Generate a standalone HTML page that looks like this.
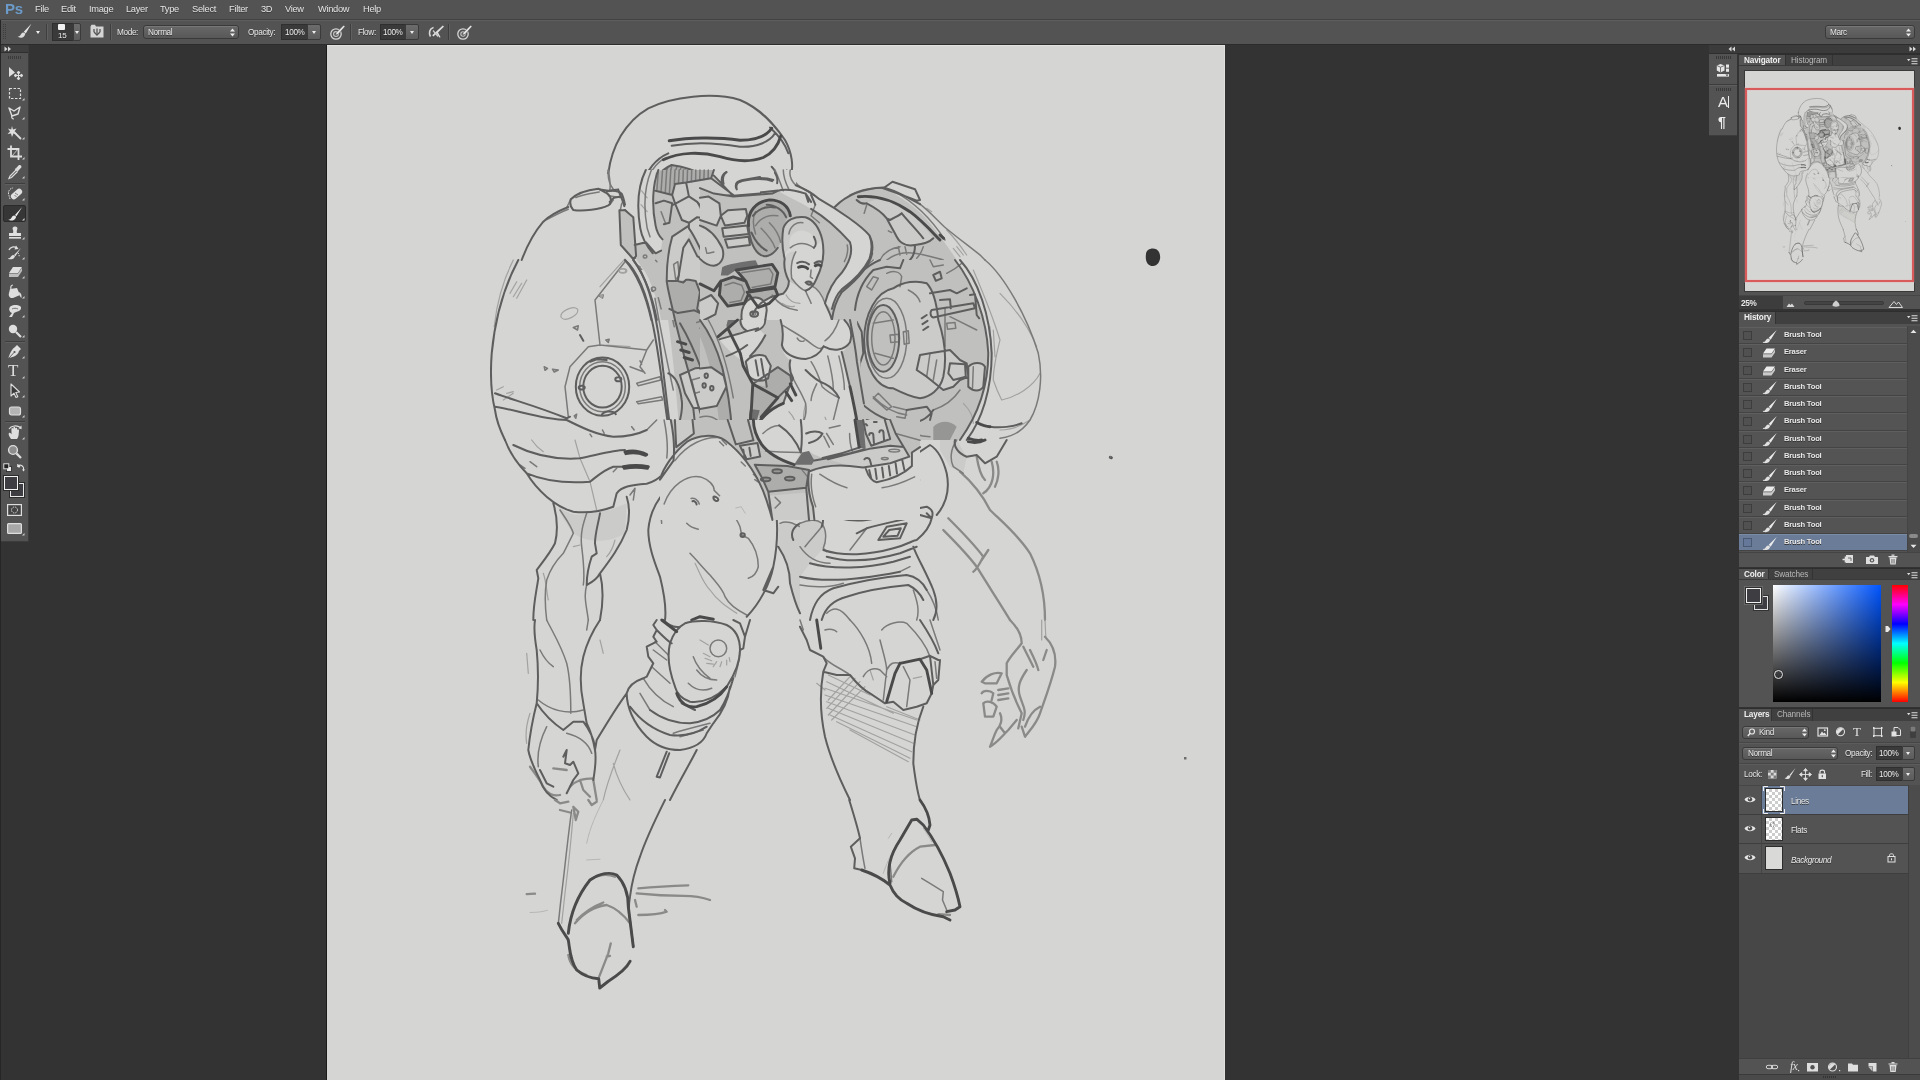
<!DOCTYPE html>
<html lang="en">
<head>
<meta charset="utf-8">
<title>Photoshop</title>
<style>
*{box-sizing:border-box;margin:0;padding:0}
html,body{width:1920px;height:1080px;overflow:hidden;background:#333333;font-family:"Liberation Sans",sans-serif;font-size:9px;color:#e6e6e6}
.abs{position:absolute}
#menubar,#optbar,.phead,.lbl,.tab{will-change:transform}
#menubar{position:absolute;left:0;top:0;width:1920px;height:20px;background:#535353;border-bottom:1px solid #424242}
#menubar .ps{position:absolute;left:5px;top:0px;font-size:15px;font-weight:bold;color:#6c9bc9;letter-spacing:-0.3px;line-height:17px}
#menubar span.m{position:absolute;top:3px;font-size:9.3px;letter-spacing:-0.3px;color:#e4e4e4;text-shadow:0 1px 0 #3a3a3a;line-height:12px}
#optbar{position:absolute;left:0;top:20px;width:1920px;height:25px;background:#535353;border-top:1px solid #5e5e5e;border-bottom:1px solid #2c2c2c}
.lbl{position:absolute;font-size:8.2px;letter-spacing:-0.35px;line-height:10px;color:#e8e8e8;text-shadow:0 1px 0 #333;white-space:nowrap}
.dd{position:absolute;height:14px;border:1px solid #3a3a3a;border-radius:3px;background:linear-gradient(#686868,#585858);box-shadow:inset 0 1px 0 #777}
.inp{position:absolute;height:16px;background:#3a3a3a;border:1px solid #2f2f2f;border-right:none}
.btn{position:absolute;height:16px;background:linear-gradient(#6c6c6c,#5c5c5c);border:1px solid #3a3a3a;border-radius:0 2px 2px 0}
.sep{position:absolute;width:1px;background:#3f3f3f;border-right:1px solid #606060;box-sizing:content-box}
.tri{position:absolute;width:0;height:0;border-left:3px solid transparent;border-right:3px solid transparent;border-top:3px solid #eee}
#canvas{position:absolute;left:327px;top:45px;width:898px;height:1035px;background:#d5d5d3;overflow:hidden;box-shadow:-1px 0 0 #1c1c1c,inset 0 1px 0 #e3e3e1,inset -1px 0 0 #e0e0de}
#canvas svg{filter:blur(0.5px)}
#tools{position:absolute;left:1px;top:45px;width:27.500px;height:497px;background:#535353;border-right:1px solid #3c3c3c;border-bottom:1px solid #3c3c3c}
.phead{position:absolute;background:#404040;border-top:1px solid #2e2e2e;border-bottom:1px solid #3a3a3a}
.tab{position:absolute;top:0;height:100%;font-size:8.200px;line-height:11.500px;letter-spacing:-0.150px;padding:0 5px;color:#b8b8b8;border-right:1px solid #333}
.tab.on{background:#535353;color:#f0f0f0;font-weight:bold}
.panel{position:absolute;background:#535353}
</style>
</head>
<body>
<!-- MENU BAR -->
<div class="abs" style="left:0;top:20px;width:1px;height:1060px;background:#262626;z-index:5"></div>
<div id="menubar">
<span class="ps">Ps</span>
<span class="m" style="left:35px">File</span>
<span class="m" style="left:61px">Edit</span>
<span class="m" style="left:89px">Image</span>
<span class="m" style="left:126px">Layer</span>
<span class="m" style="left:160px">Type</span>
<span class="m" style="left:192px">Select</span>
<span class="m" style="left:229px">Filter</span>
<span class="m" style="left:261px">3D</span>
<span class="m" style="left:285px">View</span>
<span class="m" style="left:318px">Window</span>
<span class="m" style="left:363px">Help</span>
</div>
<!-- OPTIONS BAR -->
<div id="optbar">

<svg class="abs" style="left:3px;top:3px" width="4" height="16"><g fill="#3c3c3c"><rect x="0" y="0" width="1" height="1"/><rect x="2" y="0" width="1" height="1"/><rect x="0" y="2" width="1" height="1"/><rect x="2" y="2" width="1" height="1"/><rect x="0" y="4" width="1" height="1"/><rect x="2" y="4" width="1" height="1"/><rect x="0" y="6" width="1" height="1"/><rect x="2" y="6" width="1" height="1"/><rect x="0" y="8" width="1" height="1"/><rect x="2" y="8" width="1" height="1"/><rect x="0" y="10" width="1" height="1"/><rect x="2" y="10" width="1" height="1"/><rect x="0" y="12" width="1" height="1"/><rect x="2" y="12" width="1" height="1"/><rect x="0" y="14" width="1" height="1"/><rect x="2" y="14" width="1" height="1"/></g></svg>
<svg class="abs" style="left:16px;top:1.500px" width="18" height="17" viewBox="0 0 18 17"><path d="M15.4 0.800 L7.800 8.800 L9.800 10.600 Z" fill="#e6e6e6"/><path d="M7.6 9.6 C5.6 9.6 5 11.4 4.2 12.6 C3.4 13.6 2.2 13.6 1.6 13.6 C3 15 6.4 15 8 13.4 C9 12.4 9.4 11 9.2 10.6 Z" fill="#dcdcdc"/></svg>
<div class="tri" style="left:36px;top:9.500px;border-left-width:2.5px;border-right-width:2.5px"></div>
<div class="sep" style="left:46px;top:2.500px;height:16.500px"></div>
<div class="inp" style="left:52px;top:2px;width:21px;height:17.500px;border-right:none"></div>
<div class="abs" style="left:58px;top:2.500px;width:7px;height:6.500px;background:#f2f2f2;border-radius:1px"></div>
<div class="lbl" style="left:57.500px;top:9.500px;font-size:8px;letter-spacing:-0.300px">15</div>
<div class="btn" style="left:73px;top:2px;width:8px;height:17.500px"></div>
<div class="tri" style="left:74.500px;top:9.500px;border-left-width:2.5px;border-right-width:2.5px"></div>
<svg class="abs" style="left:90px;top:3px" width="14" height="14" viewBox="0 0 14 14"><path d="M0.5 2.5 L0.5 13.5 L13.5 13.5 L13.5 2.5 L6 2.5 L5 0.8 L1.5 0.8 Z" fill="#d4d4d4"/><path d="M4 5 v3 M7 4.5 v5 M10 5 v3 M4 8 l3 3 l3 -3" stroke="#555" stroke-width="1.3" fill="none"/></svg>
<div class="sep" style="left:110px;top:2.500px;height:16.500px"></div>
<div class="lbl" style="left:117px;top:7px">Mode:</div>
<div class="dd" style="left:143px;top:4px;width:96px"></div>
<div class="lbl" style="left:148px;top:7px">Normal</div>
<svg class="abs" style="left:229px;top:7px" width="7" height="9" viewBox="0 0 7 9"><path d="M3.5 0.5 L6 3.5 H1 Z M3.5 8.5 L6 5.5 H1 Z" fill="#ededed"/></svg>
<div class="lbl" style="left:248px;top:7px">Opacity:</div>
<div class="inp" style="left:281px;top:3px;width:27px"></div>
<div class="lbl" style="left:285px;top:7px">100%</div>
<div class="btn" style="left:307px;top:3px;width:14px"></div>
<div class="tri" style="left:311.500px;top:10px;border-left-width:2.5px;border-right-width:2.5px"></div>
<svg class="abs" style="left:329px;top:3px" width="17" height="17" viewBox="0 0 17 17"><circle cx="7" cy="10" r="5.2" fill="none" stroke="#d6d6d6" stroke-width="1.3"/><circle cx="7" cy="10" r="2.4" fill="none" stroke="#c8c8c8" stroke-width="1.1"/><path d="M14.6 1.2 L16 2.6 L9 10.6 L6.6 11 L7 8.8 Z" fill="#e4e4e4" stroke="#535353" stroke-width="0.6"/></svg>
<div class="sep" style="left:350px;top:2.500px;height:16.500px"></div>
<div class="lbl" style="left:358px;top:7px">Flow:</div>
<div class="inp" style="left:380px;top:3px;width:26px"></div>
<div class="lbl" style="left:383px;top:7px">100%</div>
<div class="btn" style="left:405px;top:3px;width:14px"></div>
<div class="tri" style="left:409.500px;top:10px;border-left-width:2.5px;border-right-width:2.5px"></div>
<svg class="abs" style="left:427px;top:3px" width="18" height="17" viewBox="0 0 18 17"><path d="M6.5 3.5 C2.5 4.5 1.5 9 3.5 12.5" fill="none" stroke="#dadada" stroke-width="1.6"/><path d="M15.8 1.4 L17 2.6 L11 8.4 L13.6 13.2 L12.4 13.6 L9.6 9.6 L6.4 12.4 L5.2 11.2 Z" fill="#e0e0e0"/><path d="M6 6.5 l5 6" stroke="#cfcfcf" stroke-width="1.2"/></svg>
<div class="sep" style="left:448px;top:2.500px;height:16.500px"></div>
<svg class="abs" style="left:456px;top:3px" width="17" height="17" viewBox="0 0 17 17"><circle cx="7" cy="10" r="5.2" fill="none" stroke="#d6d6d6" stroke-width="1.3"/><circle cx="7" cy="10" r="2.2" fill="none" stroke="#c8c8c8" stroke-width="1.1"/><path d="M14.6 1.2 L16 2.6 L9 10.6 L6.6 11 L7 8.8 Z" fill="#e4e4e4" stroke="#535353" stroke-width="0.6"/></svg>
<div class="dd" style="left:1825px;top:4px;width:90px"></div>
<div class="lbl" style="left:1830px;top:7px">Marc</div>
<svg class="abs" style="left:1905px;top:7px" width="7" height="9" viewBox="0 0 7 9"><path d="M3.5 0.5 L6 3.5 H1 Z M3.5 8.5 L6 5.5 H1 Z" fill="#ededed"/></svg>

</div>
<!-- TOOLS -->
<div id="tools">
<div class="abs" style="left:0;top:0;width:27px;height:8px;background:#3f3f3f;border-bottom:1px solid #2f2f2f"></div><svg class="abs" style="left:3px;top:1px" width="8" height="6" viewBox="0 0 8 6"><path d="M0.5 0.5 L3.5 3 L0.5 5.5 Z M4 0.5 L7 3 L4 5.5 Z" fill="#d8d8d8"/></svg><div class="abs" style="left:7px;top:11px;width:13px;height:3px;background:repeating-linear-gradient(90deg,#3a3a3a 0 1px,transparent 1px 2px)"></div><svg class="abs" style="left:3px;top:20px" width="22" height="18" viewBox="0 0 22 18"><path d="M5 2 L5 12 L11 7.5 Z" fill="#dedede"/><path d="M14.5 7 v7 M11 10.5 h7 M14.5 6 l-1.5 2 h3 Z M14.5 15 l-1.5 -2 h3 Z M10 10.5 l2 -1.5 v3 Z M19 10.5 l-2 -1.5 v3 Z" stroke="#dedede" stroke-width="1" fill="#dedede"/></svg>
<svg class="abs" style="left:3px;top:40px" width="22" height="18" viewBox="0 0 22 18"><rect x="5.5" y="3.5" width="11" height="10" fill="none" stroke="#dedede" stroke-width="1.2" stroke-dasharray="2.5 1.5"/><path d="M20.5 13 V15.5 H18 Z" fill="#cfcfcf"/></svg>
<svg class="abs" style="left:3px;top:59px" width="22" height="18" viewBox="0 0 22 18"><path d="M5 4 L10 7 L16 3 L14 10 L8 12 Z" fill="none" stroke="#dedede" stroke-width="1.4" stroke-linejoin="round"/><path d="M8 12 C7 13 8 15 10 15" fill="none" stroke="#dedede" stroke-width="1.2"/><path d="M20.5 13 V15.5 H18 Z" fill="#cfcfcf"/></svg>
<svg class="abs" style="left:3px;top:79px" width="22" height="18" viewBox="0 0 22 18"><path d="M10 8 L17 15" stroke="#dedede" stroke-width="1.8"/><path d="M8 2 L9 5.5 L12.5 4.5 L10.5 7.5 L13 10 L9.5 9.5 L8 13 L7 9.5 L3.5 10 L6 7.5 L4 4.5 L7.2 5.5 Z" fill="#dedede"/><path d="M20.5 13 V15.5 H18 Z" fill="#cfcfcf"/></svg>
<svg class="abs" style="left:3px;top:99px" width="22" height="18" viewBox="0 0 22 18"><path d="M7 1.5 V12.5 H18 M3.5 5 H14.5 V16" fill="none" stroke="#dedede" stroke-width="1.8"/><path d="M8 12 L14 5" stroke="#dedede" stroke-width="0.8"/><path d="M20.5 13 V15.5 H18 Z" fill="#cfcfcf"/></svg>
<svg class="abs" style="left:3px;top:118px" width="22" height="18" viewBox="0 0 22 18"><path d="M15 2 C16.5 1.5 18 3 17.3 4.6 L14.5 7.4 L12.2 5 Z" fill="#dedede"/><path d="M11.5 5.5 L14 8" stroke="#dedede" stroke-width="2"/><path d="M12 7 L6 13 L5 15.5 L7.5 14.5 L13.5 8.5" fill="none" stroke="#dedede" stroke-width="1.2"/><path d="M20.5 13 V15.5 H18 Z" fill="#cfcfcf"/></svg>
<div class="abs" style="left:4px;top:138px;width:20px;height:1px;background:#3d3d3d;border-bottom:1px solid #5f5f5f;box-sizing:content-box"></div><svg class="abs" style="left:3px;top:140px" width="22" height="18" viewBox="0 0 22 18"><path d="M6 14 L4.5 9 M4.5 9 C4 5 7 3 9 3" fill="none" stroke="#dedede" stroke-width="1" stroke-dasharray="1.5 1"/><rect x="6" y="6" width="13" height="6" rx="3" transform="rotate(-42 12.5 9)" fill="#dedede"/><path d="M11 8 l3 2 M10.5 10.5 l2 1" stroke="#666" stroke-width="0.8"/><path d="M20.5 13 V15.5 H18 Z" fill="#cfcfcf"/></svg>
<div class="abs" style="left:2px;top:160px;width:23px;height:17px;background:#363636;border-radius:2px;border:1px solid #2a2a2a"></div><svg class="abs" style="left:3px;top:160px" width="22" height="18" viewBox="0 0 22 18"><path d="M18.2 2 L11 10 L12.4 11.2 Z" fill="#f0f0f0"/><path d="M10.4 10.4 C8.4 10.4 7.8 12.2 7 13.4 C6.2 14.4 5 14.4 4.4 14.4 C5.8 15.8 9.2 15.8 10.8 14.2 C11.8 13.2 12.2 11.8 12 11.4 Z" fill="#e8e8e8"/><path d="M20.5 13 V15.5 H18 Z" fill="#cfcfcf"/></svg>
<svg class="abs" style="left:3px;top:179px" width="22" height="18" viewBox="0 0 22 18"><path d="M11 2.5 C13 2.5 14 4 13.2 5.6 C12.6 7 12.6 8 13 9 H17 V12 H5 V9 H9 C9.4 8 9.4 7 8.8 5.6 C8 4 9 2.5 11 2.5 Z" fill="#dedede"/><rect x="5" y="13" width="12" height="1.6" fill="#dedede"/><path d="M20.5 13 V15.5 H18 Z" fill="#cfcfcf"/></svg>
<svg class="abs" style="left:3px;top:199px" width="22" height="18" viewBox="0 0 22 18"><path d="M17 4 L10 11 L11.4 12.2 Z" fill="#dedede"/><path d="M9.4 11 C7.6 11 7 12.6 6.2 13.6 C5.6 14.4 4.6 14.4 4 14.4 C5.2 15.6 8.4 15.6 9.8 14.2 C10.8 13.2 11 12.2 11 12 Z" fill="#dedede"/><path d="M5 6 C6 3 10 2 13 4" fill="none" stroke="#dedede" stroke-width="1.3"/><path d="M12 1.5 L14.5 5 L10.5 5.5 Z" fill="#dedede"/><path d="M14 9 C15 10 15.5 12 15 13" fill="none" stroke="#dedede" stroke-width="1" stroke-dasharray="1.2 1"/><path d="M20.5 13 V15.5 H18 Z" fill="#cfcfcf"/></svg>
<svg class="abs" style="left:3px;top:218px" width="22" height="18" viewBox="0 0 22 18"><path d="M9 4 H18 L14 10 H5 Z" fill="#dedede"/><path d="M5 10.6 H14 L18 4.8 V8 L14 14 H5 Z" fill="#bdbdbd"/><path d="M20.5 13 V15.5 H18 Z" fill="#cfcfcf"/></svg>
<svg class="abs" style="left:3px;top:238px" width="22" height="18" viewBox="0 0 22 18"><path d="M9 2 C7 2 6.4 4 7 6" fill="none" stroke="#dedede" stroke-width="1.2"/><path d="M6 6 L13 5 L16 12 L9 15 C6 15.6 4 13 5 10 Z" fill="#dedede"/><path d="M15 9 C17 10 18 12 17.4 15 C16 14 15.4 12 15 10 Z" fill="#dedede"/><path d="M20.5 13 V15.5 H18 Z" fill="#cfcfcf"/></svg>
<svg class="abs" style="left:3px;top:257px" width="22" height="18" viewBox="0 0 22 18"><path d="M5 15 L8 11 C5 10 4 6 7 4 C9 2.5 14 2.5 16 4 C18 5.5 17 8 15 9 C13 10 11 10 10 11 L8 15 Z" fill="#dedede"/><path d="M8 7 C10 6 12 6 14 7" stroke="#666" stroke-width="0.9" fill="none"/><path d="M20.5 13 V15.5 H18 Z" fill="#cfcfcf"/></svg>
<svg class="abs" style="left:3px;top:277px" width="22" height="18" viewBox="0 0 22 18"><circle cx="9" cy="7" r="4.2" fill="#dedede"/><path d="M12 10 L17 15" stroke="#dedede" stroke-width="2.2"/><path d="M20.5 13 V15.5 H18 Z" fill="#cfcfcf"/></svg>
<div class="abs" style="left:4px;top:296px;width:20px;height:1px;background:#3d3d3d;border-bottom:1px solid #5f5f5f;box-sizing:content-box"></div><svg class="abs" style="left:3px;top:298px" width="22" height="18" viewBox="0 0 22 18"><path d="M13 2 L17 6 L15 8 C14 12 10 14 5 15 L4.5 14.5 C6 10 8 6 11 4 Z" fill="#dedede"/><path d="M5 15 L10 9.5" stroke="#555" stroke-width="0.9"/><circle cx="10.5" cy="9" r="1.1" fill="#555"/><path d="M20.5 13 V15.5 H18 Z" fill="#cfcfcf"/></svg>
<div class="abs" style="left:7px;top:317px;will-change:transform;font-family:'Liberation Serif',serif;font-size:17px;line-height:18px;color:#dedede">T</div><svg class="abs" style="left:3px;top:318px" width="22" height="18"><path d="M20.5 13 V15.5 H18 Z" fill="#cfcfcf"/></svg><svg class="abs" style="left:3px;top:337px" width="22" height="18" viewBox="0 0 22 18"><path d="M7 2 L7 14 L10 11.2 L12 15.5 L13.8 14.7 L11.8 10.5 L15.5 10 Z" fill="#3a3a3a" stroke="#dedede" stroke-width="1.1" stroke-linejoin="round"/><path d="M20.5 13 V15.5 H18 Z" fill="#cfcfcf"/></svg>
<svg class="abs" style="left:3px;top:357px" width="22" height="18" viewBox="0 0 22 18"><rect x="5.5" y="5" width="11" height="8" rx="2" fill="#b4b4b4" stroke="#dedede" stroke-width="1.2"/><path d="M20.5 13 V15.5 H18 Z" fill="#cfcfcf"/></svg>
<div class="abs" style="left:4px;top:376px;width:20px;height:1px;background:#3d3d3d;border-bottom:1px solid #5f5f5f;box-sizing:content-box"></div><svg class="abs" style="left:3px;top:379px" width="22" height="18" viewBox="0 0 22 18"><path d="M7 15 C5 12 4 10 5 9 C6 8.4 7 9.4 7.6 10.4 L7.4 5 C7.4 3.6 9 3.6 9.2 5 L9.4 3.6 C9.6 2.4 11.2 2.6 11.2 3.8 L11.4 4.4 C11.8 3.2 13.2 3.6 13.2 4.8 L13.4 6 C14 5 15.2 5.6 15 6.8 L14.6 11 C14.4 13 13.6 14 13 15 Z" fill="#dedede"/><path d="M5 5 C7 1.5 13 0.8 16.5 3.5" fill="none" stroke="#dedede" stroke-width="1.1"/><path d="M17.5 1.5 L17.6 5.2 L14.4 4.2 Z" fill="#dedede"/><path d="M20.5 13 V15.5 H18 Z" fill="#cfcfcf"/></svg>
<svg class="abs" style="left:3px;top:398px" width="22" height="18" viewBox="0 0 22 18"><circle cx="9" cy="7" r="4.4" fill="#8d8d8d" stroke="#dedede" stroke-width="1.4"/><path d="M12.4 10.4 L17 15" stroke="#dedede" stroke-width="2.2"/></svg>
<svg class="abs" style="left:2px;top:418px" width="24" height="10" viewBox="0 0 24 10"><rect x="3.5" y="3.5" width="5" height="5" fill="#eee" stroke="#222" stroke-width="0.8"/><rect x="0.8" y="0.8" width="5" height="5" fill="#222" stroke="#eee" stroke-width="0.9"/><path d="M15 3 C17 1.5 19 2 20.5 4.5 M14.8 1 V3.4 H17.2 M20.5 4.5 V7" fill="none" stroke="#e4e4e4" stroke-width="1.1"/><path d="M19 6.5 L20.5 8.5 L22 6.5 Z M14 3.5 L16.5 2 V5Z" fill="#e4e4e4"/></svg><div class="abs" style="left:9px;top:438px;width:14px;height:14px;background:#3d3d42;border:1px solid #e8e8e8;outline:1px solid #2c2c2c"></div><div class="abs" style="left:3px;top:431px;width:14px;height:14px;background:#3d3d42;border:1px solid #f2f2f2;outline:1px solid #2c2c2c"></div><svg class="abs" style="left:6px;top:459px" width="15" height="12" viewBox="0 0 15 12"><rect x="0.6" y="0.6" width="13.8" height="10.8" fill="#444" stroke="#dedede" stroke-width="1.2"/><circle cx="7.5" cy="6" r="3" fill="none" stroke="#dedede" stroke-width="1" stroke-dasharray="1.4 1"/></svg><svg class="abs" style="left:3px;top:475px" width="22" height="18" viewBox="0 0 22 18"><rect x="3.6" y="3.6" width="13.8" height="9.8" rx="1" fill="#a8a8a8" stroke="#dedede" stroke-width="1.2"/><path d="M20.5 13 V15.5 H18 Z" fill="#cfcfcf"/></svg>
</div>
<!-- CANVAS -->
<div id="canvas">
<!--ART--><svg class="abs" style="left:0;top:0" width="898" height="1035" viewBox="327 45 898 1035"><g id="art" fill="none" stroke-linecap="round" stroke-linejoin="round">
<path fill="#c0c0be" d="M653.3 190C655 178.3 661.7 168.3 671.7 164.2L713.3 178.3L735 195.8L780 190.8L800 200L800 260L655 260C646.7 240 646.7 213.3 653.3 190Z"/>
<path fill="#cbcbc9" d="M676.7 196.7L690 193.3L701.7 216.7L686.7 223.3C676.7 240 666.7 253.3 656.7 260L646.7 260C646.7 246.7 653.3 230 656.7 210L668.3 206.7Z"/>
<path fill="#adadab" d="M655 186.7L659.2 173.3L671.7 164.7L713.3 178.7L708.3 186.7L678.3 181.7L671.7 196.7L655 191.7Z"/>
<path fill="#cbcbc9" d="M688.3 195L706.7 196.7L730 190L736.7 196.7L726.7 203.3L706.7 206.7L720 223.3L701.7 216.7Z"/>
<path fill="#adadab" d="M720 223.3L746.7 220L753.3 206.7L736.7 196.7L726.7 203.3L706.7 206.7Z"/>
<path fill="#c0c0be" d="M625 210L620 213.3L621.7 245L633.3 259.2L636.7 256.7L630.8 216.7Z"/>
<path fill="#adadab" d="M750 206.7C763.3 196.7 780 196.7 800 203.3L800 260L763.3 260C746.7 243.3 743.3 223.3 750 206.7Z"/>
<path stroke="#a2a2a0" stroke-width="1.2" d="M640 246.7L663.3 256.7M643.3 260L645 253.3"/>
<path stroke="#7a7a7a" stroke-width="1.5" d="M608.3 170C607.5 178.3 610 185 613.3 189.2M646.7 246.7C638.3 226.7 638.3 200 646.7 180C651.7 168.3 660 160 666.7 157.5M652.5 230C648.3 213.3 648.3 196.7 653.3 186.7M783.3 173.3C786.7 180 788.3 186.7 785 193.3M786.7 170C791.7 176.7 795 183.3 800 186.7M656.7 186.7L663.3 170.8M660.8 188.3L667.5 168.3M665 189.2L671.7 166.7M669.2 186.7L676.7 167.5M673.3 185L680.8 168.3M677.5 182.5L685 170M682.5 181.7L689.2 171.3M686.7 182L693.3 172.7M691.7 183L697.5 174.2M696.7 184.2L701.7 175.7M701.7 185L705.8 177M706.7 186L710 178.3M686.7 223.3L695 230L688.3 246.7L696.7 260M695 230L718.3 226.7L725 240L720 260M725 240L746.7 235M720 230L746.7 226.7M656.7 210L668.3 206.7L666.7 223.3M656.7 210C655 221.7 655 238.3 658.3 250M753.3 223.3C756.7 213.3 768.3 206.7 780 208.3M750 230C753.3 243.3 760 253.3 766.7 260M756.7 226.7C763.3 240 770 250 780 256.7M763.3 220C773.3 226.7 780 236.7 786.7 250M773.3 213.3C783.3 220 790 230 796.7 240M575.8 197.5C583.3 194.2 591.7 193.3 599.2 192M570.8 199.2L567 207M546.7 219.7C555 215 561.7 211.7 568.3 209.2M608.7 195.8L621.7 197.7M613.3 200L610 204.2M621.7 203.3L619.7 213.3"/>
<path stroke="#5e5e5e" stroke-width="2.0" d="M608.3 173.3C611.7 146.7 625 121.7 648.3 108.3C671.7 96.7 713.3 91.7 740 100C760 108.3 773.3 123.3 785 140C791.7 151.7 794.2 166.7 790.3 178.3C788.3 184.2 785 188.3 780 190.3M671.7 145.8C693.3 141.7 720 143.3 740 146.7C756.7 147.5 770 141.7 775 133.3M770 127.5C778.3 135 785 143.3 788.3 153.3M653.3 256.7C640 236.7 635 213.3 641.7 186.7C646.7 170 656.7 158.3 668.3 153.3M651.7 195C653.3 180 660 170 671.7 165C685 166.7 701.7 173.3 713.3 178.3C721.7 183.3 726.7 190 735 195.3L780 190.3M736.7 188.3C735.8 182.5 740 180.3 746.7 179.3C756.7 177.7 766.7 177.7 773.3 180M723.3 182.5C723 178.3 724.7 174.7 726.7 172.7M771.7 166.7C775 170 777 175 777 178.7M671.7 196.7L678.3 181.7L708.3 186.7M671.7 196.7C673.3 206.7 671.7 216.7 668.3 223.3M676.7 196.7L690 193.3L706.7 196.7L730 190M690 193.3L701.7 216.7L720 223.3L746.7 220M706.7 196.7L706.7 206.7L726.7 203.3L736.7 196.7M701.7 216.7L686.7 223.3C676.7 240 666.7 253.3 656.7 260M746.7 220C750 206.7 763.3 198.3 780 200C790 201.7 796.7 206.7 800 211.7M786.7 220C793.3 218.3 796.7 220 800 221.7M785 230C791.7 230 796.7 231.7 800 235M570.8 199.2C576.7 193.3 586.7 190 598.3 188.7L607 193.3C612 196.7 612 203.3 608.3 205.3C600 209.3 583.3 211.7 573.3 210C570 206.7 569.7 203.3 570.8 199.2ZM568.3 207C556.7 211.7 546.7 218.3 543.3 221.7C533.3 233.3 526.7 246.7 521.7 260M607 191.3C613.3 190 618.7 191 621.7 193.7C623.3 196.7 624.3 201.7 625 204.7M625 210L620 213.3L621.7 245L633.3 259.2L636.7 256.7L630.8 216.7Z"/>
<path stroke="#4a4a4a" stroke-width="2.9" d="M669.2 140.8C688.3 137.5 716.7 136.7 740 140.3C755 140.3 766.7 135.8 771.7 128.3M663.3 159.7C680 151.7 701.7 151.7 720 156.7C736.7 161.7 750 162.5 763.3 157.5C773.3 152.5 778.3 145 780.8 135.8"/>
<path fill="#c0c0be" d="M835 206.7C850 193.3 870 186.7 885 188.3C900 196.7 916.7 206.7 930 223.3C941.7 238.3 950 250 956.7 260L825 260C821.7 246.7 821.7 226.7 835 206.7Z"/>
<path fill="#cbcbc9" d="M866.7 203.3C873.3 206.7 881.7 211.7 886.7 218.3C890 225 893.3 230 896.7 236.7C900 243.3 906.7 246.7 915 245C923.3 244.2 930 241.7 933.3 238.3C926.7 230 916.7 216.7 901.7 206.7C890 200 876.7 196.7 866.7 203.3Z"/>
<path fill="#d5d5d3" d="M800 188.3L810 195L818.3 199.2C833.3 208.3 855 221.7 870 236.7L873.3 246.7L866.7 260L853.3 260C850 246.7 833.3 230 816.7 213.3L800 203.3ZM800 211.7C806.7 213.3 813.3 218.3 816.7 226.7C820 236.7 821.7 246.7 820 260L800 260Z"/>
<path stroke="#a2a2a0" stroke-width="1.2" d="M946.7 230C953.3 236.7 960 245 966.7 255M953.3 248.3L960 256.7M956.7 246.7L963.3 255M926.7 208.3L931.7 211.7"/>
<path stroke="#7a7a7a" stroke-width="1.5" d="M920 204.2C930 211.7 938.3 221.7 945.7 228C958.3 238.3 971.7 248.3 980.8 255.7L985 260M850 195C863.3 188.3 873.3 187.5 883.3 188.3M893.3 190.8C916.7 203.3 933.3 221.7 945 240M866.7 205L864.2 213.3M888.3 230.8L891.7 232.5M848.3 245L858.3 246.7M800 196.7C805 200 810 203.3 813.3 208.3M821.7 201.7L816.7 211.7M800 225C806.7 230 813.3 238.3 816.7 246.7M800 240C805 243.3 810 246.7 811.7 253.3M803.3 216.7C808.3 221.7 811.7 226.7 813.3 233.3M880 260C883.3 253.3 890 248.3 900 246.7M886.7 260C893.3 255 903.3 251.7 915 253.3C926.7 255 936.7 258.3 943.3 260M898.3 246.7L900 255M905 246.7L906.7 254.2M923.3 246.7C921.7 251.7 920 255 916.7 258.3"/>
<path stroke="#5e5e5e" stroke-width="2.0" d="M835 206.7C846.7 195 863.3 188.3 883.3 187.5C893.3 190 906.7 196.7 920 204.2M883.3 188.3L892.5 181.7L915 189.2L920 200L916.7 200.8C906.7 196.7 893.3 191.7 883.3 188.3M856.7 200C860 203.3 863.3 204.2 866.7 203.3C873.3 206.7 881.7 211.7 886.7 218.3L890 220C896.7 216.7 900 215 901.7 213.3M886.7 218.3C890 225 893.3 230 896.7 236.7C900 243.3 906.7 246.7 915 245M915 245C915 251.7 913.3 256.7 910 260M915 245C923.3 244.2 930 241.7 933.3 238.3M901.7 213.3C910 223.3 916.7 230 923.3 238.3M800 188.3C806.7 190 811.7 193.3 816.7 198.3M810 195L818.3 199.2M818.3 199.2C833.3 208.3 855 221.7 870 236.7C872.5 241.7 873.3 246.7 871.7 253.3M816.7 203.3L813.3 208.3M800 203.3C810 210 823.3 220 836.7 233.3C846.7 243.3 851.7 251.7 853.3 260M800 211.7C806.7 213.3 813.3 218.3 816.7 226.7C820 236.7 821.7 246.7 820 260"/>
<path stroke="#4a4a4a" stroke-width="2.9" d="M858.3 196.7C875 195 893.3 200 910 211.7C923.3 221.7 933.3 233.3 940 240M940 235L943.7 238.3"/>
<path fill="#c0c0be" d="M661.7 260L800 260L800 440L680 440C676.7 393.3 671.7 343.3 666.7 310C665 290 663.3 273.3 661.7 260Z"/>
<path fill="#adadab" d="M665 283.3C673.3 310 680 343.3 690 376.7C696.7 401.7 703.3 423.3 710 440L740 440C730 410 720 376.7 713.3 353.3C705 326.7 696.7 301.7 688.3 285Z"/>
<path fill="#cbcbc9" d="M680 375L695 368.3L716.7 366.7L725 380L720 393.3L710 406.7L693.3 408.3L685 393.3Z"/>
<path fill="#adadab" d="M695 270L706.7 261.7L720 265L725 278.3L713.3 291.7L698.3 288.3ZM720 281.7L740 276.7L746.7 286.7L741.7 298.3L723.3 300L716.7 290ZM740 266.7L776.7 265L783.3 280L773.3 291.7L750 291.7L745 278.3Z"/>
<path fill="#6e6e6e" d="M720 265L735 260L740 266.7L745 278.3L740 276.7L720 281.7L725 278.3Z"/>
<path fill="#969694" d="M753.3 393.3L763.3 383.3L780 390L785 403.3L773.3 416.7L755 410ZM770 376.7L788.3 368.3L793.3 380L780 390L763.3 383.3Z"/>
<path fill="#6e6e6e" d="M753.3 406.7L763.3 403.3L761.7 420L750 426.7Z"/>
<path fill="#cbcbc9" d="M701.7 305L710 300L718.3 305L715 311.7L705 311.7Z"/>
<path fill="#d5d5d3" d="M740 300C750 296.7 760 301.7 765 310C766.7 318.3 763.3 326.7 753.3 330C746.7 331.7 740 330 737.5 323.3C736.7 315 736.7 306.7 740 300ZM720 338.3C730 335 740 333.3 753.3 330L763.3 346.7C753.3 353.3 743.3 356.7 730 358.3C723.3 353.3 720 346.7 720 338.3ZM743.3 360C750 356.7 760 355 766.7 360L770 373.3C763.3 380 753.3 380 746.7 373.3Z"/>
<path fill="#cbcbc9" d="M770 293.3C776.7 310 780 323.3 796.7 333.3L800 333.3L800 260L780 260C783.3 273.3 776.7 283.3 770 293.3Z"/>
<path stroke="#a2a2a0" stroke-width="1.2" d="M513.3 260C503.3 280 496.7 303.3 494.2 326.7M561.3 317.5C558.3 311.7 573.3 305 577.5 309.2C580 315 565 322.5 561.3 317.5ZM619.2 270.8C619.2 268.3 625.8 268.3 625.8 270.8C625.8 273.3 619.2 273.3 619.2 270.8ZM510 293.3L516.7 281.7M513.3 296.7L521.7 283.3M516.7 298.3L526.7 280M496.7 390L503.3 386.7M506.7 393.3L513.3 391.7M606.7 345L630 346.7M503.3 400L513.3 393.3"/>
<path stroke="#7a7a7a" stroke-width="1.5" d="M625 261.7L595 300L600 345L588.3 346.7M600 345L646.7 350L653.3 340M588.3 346.7L570 366.7L565 386.7L568.3 416.7M646.7 350L640 366.7L645 373.3M630 366.7L643.3 371.7M646.7 430L656.7 420M602.5 361.7C615.3 361.7 625.3 373 625.3 386.7C625.3 400.3 615.3 411.7 602.5 411.7C589.7 411.7 579.7 400.3 579.7 386.7C579.7 373 589.7 361.7 602.5 361.7ZM599.2 295.8L603.3 295L602.5 298ZM573.3 327.5L578.3 325.8L577.5 330ZM605.8 340L609.2 339.2L608.3 342.5ZM544.2 366.7L547.5 368.3L545 370.3ZM552.5 369.2L558.3 370L554.2 372ZM574.2 415.8L576.7 414.2L575.8 418.3ZM640 360.8L641.7 364.2M602.5 430L604.2 433.3M631.7 426.7L634.2 430M590 434.2L591.7 436.7M636.7 383.3L660 376.7L660.8 380L638.3 385.8ZM636.7 401.7L661.7 396.7L662.5 400L638.3 403.7ZM655 298.3C660 326.7 666.7 360 673.3 390M693.3 316.7L698.3 315M696.7 322.5L701.7 320.8M700 328.3L705 326.7M703.3 334.2L708.3 332.5M705.8 340L710.8 338.3M671.7 315L674.2 326.7M676.7 263.3L673.3 276.7M691.7 380L703.3 376.7L706.7 390L695 393.3ZM705.8 375C705.8 373 709.2 373 709.2 375C709.2 377 705.8 377 705.8 375ZM710.8 387.5C710.8 385.5 714.2 385.5 714.2 387.5C714.2 389.5 710.8 389.5 710.8 387.5ZM720 393.3L740 386.7M653.3 265C653.3 263 656.7 263 656.7 265C656.7 267 653.3 267 653.3 265ZM651.7 290C651.7 288 655 288 655 290C655 292 651.7 292 651.7 290ZM725 285L738.3 281.7L742.5 288.3L739.2 295.8L726.7 296.7M750 270L773.3 269.2L778.3 279.2L770.8 287.5L753.3 287.5M752.5 315.8C752.5 314.7 755.8 314.7 755.8 315.8C755.8 318 752.5 318 752.5 315.8ZM770 293.3C776.7 310 780 323.3 796.7 333.3M800 353.3C793.3 360 790 370 793.3 380M780 260C783.3 270 788.3 280 786.7 290M788.3 260C791.7 268.3 793.3 276.7 791.7 285M773.3 416.7C780 423.3 790 426.7 800 426.7M785 403.3C790 410 796.7 413.3 800 413.3M746.7 420C753.3 426.7 760 433.3 763.3 440"/>
<path stroke="#5e5e5e" stroke-width="2.0" d="M518.3 260C505 285 495 318.3 491.7 353.3C490 376.7 491.7 396.7 495 410C496.7 423.3 501.7 433.3 505 440M495 393.3C513.3 400 538.3 406.7 566.7 418.3M495 406.7C516.7 410 543.3 420 566.7 420C580 426.7 596.7 435 613.3 436.7C630 436.7 640 433.3 646.7 430M566.7 418.3L570 416.7M625 260C636.7 270 646.7 293.3 653.3 326.7C660 360 663.3 393.3 668.3 426.7M633.3 260C646.7 276.7 653.3 303.3 658.3 333.3C663.3 368.3 666.7 401.7 671.7 440M602.5 357.5C617.5 357.5 629.2 370.8 629.2 386.7C629.2 402.5 617.5 415.8 602.5 415.8C587.5 415.8 575.8 402.5 575.8 386.7C575.8 370.8 587.5 357.5 602.5 357.5ZM602.5 365.8C613 365.8 621.7 375 621.7 386.7C621.7 398.3 613 407.5 602.5 407.5C592 407.5 583.3 398.3 583.3 386.7C583.3 375 592 365.8 602.5 365.8ZM578.7 387.5C578.7 385 584.7 385 584.7 387.5C584.7 390.3 578.7 390.3 578.7 387.5ZM615.3 379.2C615.3 376.7 621.3 376.7 621.3 379.2C621.3 382 615.3 382 615.3 379.2ZM601.7 415C603.3 410.8 613.3 410 615.8 414.2M590 361.7L596.7 359.2L606.7 360M580 335L583.3 340.8M665 283.3C673.3 310 680 343.3 690 376.7C696.7 401.7 703.3 423.3 710 440M668.3 260L666.7 280L688.3 285L686.7 276.7L695 270M663.3 313.3L673.3 311.7L685 313.3L696.7 310C713.3 326.7 723.3 346.7 730 373.3M680 323.3C690 340 696.7 356.7 701.7 370M680 375L695 368.3L716.7 366.7L725 380L720 393.3L710 406.7L693.3 408.3L685 393.3ZM668.3 373.3C676.7 376.7 680 386.7 681.7 400C683.3 410 680 420 678.3 426.7M693.3 408.3L696.7 440M710 406.7L726.7 403.3L740 426.7L746.7 440M695 270L706.7 261.7L720 265L725 278.3L713.3 291.7L698.3 288.3ZM720 281.7L740 276.7L746.7 286.7L741.7 298.3L723.3 300L716.7 290ZM740 266.7L776.7 265L783.3 280L773.3 291.7L750 291.7L745 278.3ZM701.7 305L710 300L718.3 305L715 311.7L705 311.7ZM740 300C750 296.7 760 301.7 765 310C766.7 318.3 763.3 326.7 753.3 330C746.7 331.7 740 330 737.5 323.3C736.7 315 736.7 306.7 740 300ZM750.5 315.8C750.5 313.7 757.8 313.7 757.8 315.8C757.8 320 750.5 320 750.5 315.8ZM720 338.3C730 335 740 333.3 753.3 330M730 358.3C743.3 356.7 753.3 353.3 763.3 346.7M765 310C773.3 316.7 780 326.7 790 330M743.3 360C750 356.7 760 355 766.7 360M753.3 363.3L756.7 376.7M760 361.7L763.3 375M746.7 373.3C753.3 380 763.3 380 770 373.3M743.3 360L746.7 373.3"/>
<path stroke="#4a4a4a" stroke-width="2.9" d="M677.5 341.7L685.8 344.2M680.8 350L689.2 352.5M684.2 357.5L692.5 360M716.7 290L715 296.7L736.7 330L720 338.3M736.7 330L737.5 323.3M741.7 298.3L746.7 286.7L745 278.3M770 376.7L788.3 368.3L793.3 380L780 390L763.3 383.3ZM763.3 383.3L753.3 393.3L755 410L746.7 420M780 390L785 403.3L773.3 416.7L755 410"/>
<path fill="#c0c0be" d="M840 300C850 280 866.7 265 880 260L955 260C973.3 283.3 986.7 318.3 988.3 353.3C988.3 386.7 976.7 416.7 960 440L855 440C850 410 846.7 376.7 850 353.3C848.3 333.3 845 315 840 300Z"/>
<path fill="#cbcbc9" d="M893.3 288.3C903.3 281.7 916.7 280 926.7 283.3C933.3 290 936.7 303.3 938.3 320C945 340 946.7 360 943.3 376.7C940 390 930 396.7 920 398.3C910 396.7 900 391.7 893.3 388.3C876.7 388.3 864.2 366.7 864.2 340C864.2 313.3 876.7 291.7 893.3 288.3Z"/>
<path fill="#c0c0be" d="M883.3 305C892 305 899.2 320 899.2 338.3C899.2 356.7 892 371.7 883.3 371.7C874.7 371.7 867.5 356.7 867.5 338.3C867.5 320 874.7 305 883.3 305Z"/>
<path fill="#cbcbc9" d="M968.3 366.7C973.3 361.7 981.7 361.7 985 366.7L983.3 386.7C980 391.7 973.3 391.7 968.3 386.7ZM920 355L930 353.3L950 350L960 360L966.7 363.3L968.3 376.7L960 380L953.3 386.7L943.3 390L926.7 376.7L916.7 370Z"/>
<path fill="#969694" d="M933.3 426.7C940 420 950 420 956.7 426.7L950 440L933.3 440Z"/>
<path stroke="#a2a2a0" stroke-width="1.2" d="M1000 293.3C1016.7 310 1030 330 1036.7 346.7M1000 340C996.7 353.3 993.3 366.7 993.3 380C996.7 390 1000 396.7 1001.7 400C1016.7 396.7 1033.3 386.7 1040 373.3M973.3 270C983.3 293.3 991.7 313.3 1000 340M1030 420C1020 426.7 1010 430 1000 430M990 326.7L991.7 360M993.3 330L995 356.7M963.3 403.3C970 410 973.3 416.7 973.3 423.3"/>
<path stroke="#7a7a7a" stroke-width="1.5" d="M820 270C821.7 280 820 290 816.7 296.7M801.7 300C803.3 305 802.5 310 805 313.3M830 280C833.3 273.3 840 270 843.3 263.3M816.7 330C823.3 336.7 833.3 343.3 841.7 338.3M800 316.7C805 320 808.3 326.7 810 333.3M816.7 356.7C820 366.7 826.7 376.7 833.3 380C838.3 386.7 840 393.3 840 400M810 366.7C816.7 376.7 823.3 386.7 826.7 396.7M800 360C805 366.7 808.3 373.3 810 380M800 386.7C806.7 393.3 813.3 400 816.7 410C818.3 420 820 430 818.3 440M833.3 403.3C836.7 413.3 838.3 426.7 836.7 440M841.7 353.3C842.5 358.3 842 363.3 841.7 366.7M833.3 305C843.3 290 856.7 273.3 873.3 260M985 260C1003.3 275 1026.7 315 1038.3 353.3C1043.3 376.7 1040 403.3 1030 420C1023.3 430 1013.3 436.7 1000 438.3M886.7 298.3C897.7 298.3 906.7 316.3 906.7 338.3C906.7 360.3 897.7 378.3 886.7 378.3C875.7 378.3 866.7 360.3 866.7 338.3C866.7 316.3 875.7 298.3 886.7 298.3ZM883.3 311.7C889.7 311.7 895 323.7 895 338.3C895 353 889.7 365 883.3 365C877 365 871.7 353 871.7 338.3C871.7 323.7 877 311.7 883.3 311.7ZM908.3 290C915 293.3 918.3 296.7 920 301.7M890 335L898.3 334.2L899.2 341.7L890.8 342.5ZM903.3 331.7L908.3 330.8L909.2 343.3L904.2 344.2ZM873.3 323.3L893.3 320M875 353.3L893.3 358.3M946.7 323.3L955 322.5L955.8 328.3L947.5 329.2ZM945 308.3L945 346.7M950 316.7L976.7 330M930 353.3L926.7 376.7M936.7 360L933.3 380M973.3 366.7L972.5 388.3M873.3 396.7C883.3 406.7 893.3 413.3 906.7 415M878.3 393.3L873.3 398.3L886.7 410L891.7 406.7ZM893.3 406.7L906.7 410L905 418.3L896.7 416.7M933.3 410C943.3 406.7 953.3 400 960 390M873.3 440L875 430L890 433.3M900 426.7C910 433.3 920 436.7 930 436.7M855 333.3L857.5 360M866.7 286.7L873.3 276.7L878.3 278.3L871.7 290ZM886.7 273.3C893.3 270 900 271.7 901.7 276.7L900 286.7M930 260L933.3 266.7L943.3 265M946.7 273.3C953.3 270 958.3 266.7 961.7 263.3"/>
<path stroke="#5e5e5e" stroke-width="2.0" d="M800 265C803.3 266.7 808.3 266.7 811.7 265M805 270L810 269.2M807.5 275L806.7 281.7L809.2 282.5M805.8 285.8C808.3 285 810.8 285.8 811.7 287.5M815 260C816.7 273.3 815 286.7 810 293.3C806.7 296.7 803.3 293.3 800 290M810 293.3C811.7 300 810 305 808.3 310M825 260C826.7 276.7 830 293.3 833.3 303.3M833.3 303.3C843.3 316.7 850 330 850 343.3C848.3 350 843.3 353.3 836.7 353.3C826.7 353.3 816.7 350 810 346.7M800 340C806.7 343.3 813.3 350 816.7 356.7M816.7 356.7C826.7 360 836.7 358.3 841.7 353.3M880 260C866.7 265 850 280 840 300C845 315 848.3 333.3 850 353.3M955 260C973.3 283.3 986.7 318.3 988.3 353.3C988.3 386.7 976.7 416.7 960 440M960 260C978.3 280 990 315 991.7 353.3C991.7 390 981.7 420 966.7 440M990 426.7C1000 428.3 1013.3 426.7 1021.7 423.3M893.3 288.3C903.3 281.7 916.7 280 926.7 283.3C933.3 290 936.7 303.3 938.3 320C945 340 946.7 360 943.3 376.7C940 390 930 396.7 920 398.3C910 396.7 900 391.7 893.3 388.3C876.7 388.3 864.2 366.7 864.2 340C864.2 313.3 876.7 291.7 893.3 288.3M883.3 305C892 305 899.2 320 899.2 338.3C899.2 356.7 892 371.7 883.3 371.7C874.7 371.7 867.5 356.7 867.5 338.3C867.5 320 874.7 305 883.3 305ZM921.7 318.3L926.7 315M922.5 324.2L927.5 320.8M923.3 330L928.3 326.7M931.7 310L973.3 303.3L975 308.3L933.3 317.5C930 316.7 930 311.7 931.7 310ZM940 300L950 299.2L950.8 308.3M930 293.3L950 290L956.7 293.3L966.7 288.3M970 295L975 294.2L976.7 315L979.2 318.3M933.3 275L940 271.7L941.7 278.3L935.8 280.8ZM920 355L930 353.3L950 350L960 360L966.7 363.3L968.3 376.7L960 380L953.3 386.7L943.3 390L926.7 376.7L916.7 370ZM950 363.3L965 364.2L965.8 376.7L953.3 380L948.3 373.3ZM968.3 366.7C973.3 361.7 981.7 361.7 985 366.7L983.3 386.7C980 391.7 973.3 391.7 968.3 386.7ZM855 396.7C866.7 410 883.3 420 900 423.3C916.7 425 926.7 420 933.3 410M906.7 410L926.7 406.7L931.7 413.3L930 420M855 410L866.7 440M866.7 420L886.7 426.7L893.3 440M850 323.3L856.7 321.7L861.7 331.7L863.3 353.3L860 363.3L858.3 400L855 403.3L851.7 366.7M855 310C856.7 293.3 863.3 280 873.3 270L886.7 266.7L900 268.3L903.3 260"/>
<path stroke="#4a4a4a" stroke-width="2.9" d="M841.7 366.7C845 380 848.3 393.3 851.7 410L855 440M976.7 422.5C981.7 425 986.7 426.7 990 426.7M968.3 438.3C973.3 440 978.3 440.8 981.7 440"/>
<path fill="#cbcbc9" d="M558.3 506.7C566.7 513.3 576.7 516.7 586.7 513.3L610 510L626.7 503.3L625 533.3C610 543.3 586.7 543.3 573.3 533.3C566.7 523.3 560 515 558.3 506.7Z"/>
<path fill="#c0c0be" d="M726.7 440L800 440L800 490L773.3 490C770 473.3 753.3 453.3 740 446.7Z"/>
<path fill="#cbcbc9" d="M763.3 465L800 470L800 490L773.3 490ZM778.3 523.3C786.7 520 793.3 523.3 800 526.7L800 613.3C796.7 606.7 793.3 596.7 790 583.3C790 570 785 556.7 778.3 546.7Z"/>
<path stroke="#a2a2a0" stroke-width="1.2" d="M575 440L580 458.3L590 481.7L596.7 510M531.7 440C535 445 538.3 448.3 543.3 451.7M573.3 546.7L580 545M543.3 573.3C546.7 583.3 546.7 593.3 548.3 600M606.7 556.7C610 553.3 613.3 546.7 615 540M695 563.3C700 573.3 703.3 583.3 710 590C716.7 600 726.7 606.7 736.7 613.3M736.7 506.7L743.3 508.3L744.2 513.3M755 463.3L758.3 476.7M756.7 481.7L760 488.3"/>
<path stroke="#7a7a7a" stroke-width="1.5" d="M616.7 468.3L613.3 471.7M668.3 440C670 450 668.3 460 663.3 470M520 465L525 468.3M530 461.7L536.7 466.7M560 510C566.7 520 571.7 526.7 573.3 533.3C570 540 566.7 546.7 563.3 553.3C556.7 560 550 570 546.7 580C545 590 545 606.7 546.7 620M586.7 513.3C583.3 523.3 580 533.3 581.7 546.7C583.3 560 585 573.3 583.3 585M586.7 585C583.3 596.7 586.7 606.7 588.3 620M630 495L635 488.3L633.3 500M680 475C690 471.7 703.3 476.7 713.3 490L716.7 498.3L725 501.7C730 510 736.7 518.3 740 526.7L741.7 535L748.3 538.3C755 546.7 758.3 556.7 758.3 566.7C756.7 573.3 753.3 576.7 748.3 578.3M671.7 485C663.3 496.7 660 510 661.7 523.3M671.7 485C673.3 476.7 675 465 676.7 455M686.7 498.3C691.7 496.7 698.3 500 703.3 506.7C705 511.7 701.7 515 696.7 513.3M686.7 523.3C690 526.7 693.3 528.3 698.3 529.2M690 553.3C696.7 560 703.3 568.3 710 575C716.7 583.3 723.3 590 725 596.7C728.3 603.3 736.7 610 746.7 615M780 523.3C786.7 520 793.3 523.3 800 526.7M740 450L741.7 458.3M745 449.2L746.7 456.7M750 448.3L751.7 455M726.7 445L730 450M721.7 443.3L725 448.3"/>
<path stroke="#5e5e5e" stroke-width="2.0" d="M505 440C510 453.3 518.3 465 526.7 473.3C536.7 490 555 506.7 573.3 511.7C586.7 513.3 600 511.7 613.3 506.7L616.7 493.3C621.7 486.7 630 485 646.7 483.7C660 480 668.3 470 671.7 456.7L673.3 440M513.3 445C533.3 455 556.7 460 580 458.3C596.7 455 613.3 450 625 450M526.7 473.3C546.7 481.7 570 483.3 590 481.7C596.7 476.7 603.3 470 613.3 466.7L623.3 466.7M553.3 503.3C556.7 515 558.3 530 555 543.3C550 553.3 541.7 563.3 536.7 570L538.3 578.3C536.7 590 533.3 603.3 533.3 620M626.7 496.7C630 506.7 630 516.7 626.7 530C620 546.7 610 560 600 573.3C596.7 580 590 583.3 586.7 585M600 513.3C598.3 523.3 595 533.3 595 543.3L596.7 553.3L591.7 556.7C588.3 566.7 586.7 573.3 586.7 585M600 573.3C603.3 586.7 603.3 603.3 600 620M671.7 485C660 495 650 510 648.3 530C648.3 546.7 655 563.3 660 576.7C663.3 590 666.7 606.7 665 620M676.7 455C696.7 443.3 726.7 440 740 446.7C753.3 453.3 770 473.3 773.3 490C778.3 516.7 778.3 543.3 773.3 566.7C770 583.3 760 603.3 746.7 616.7M691.7 501.7C694.2 500.8 696.7 503.3 696.7 505.8M714.2 498.3C714.2 496.3 717.8 496.3 717.8 498.3C717.8 500.7 714.2 500.7 714.2 498.3ZM740.5 535C740.5 532.7 744.8 532.7 744.8 535C744.8 537.7 740.5 537.7 740.5 535ZM773.3 566.7L763.3 590L773.3 593.3L778.3 586.7M778.3 546.7C785 556.7 790 570 790 583.3C793.3 596.7 796.7 606.7 800 613.3M730 440L740 446.7L746.7 445L753.3 453.3L766.7 450L800 460M763.3 465L800 470M800 490L773.3 490M753.3 453.3L763.3 465M793.3 540C790 533.3 793.3 526.7 800 523.3M775 470.8C775 469.2 781.7 469.2 781.7 470.8C781.7 472.8 775 472.8 775 470.8ZM763.3 479.2C763.3 477.5 770 477.5 770 479.2C770 481.2 763.3 481.2 763.3 479.2ZM786.7 478.3C786.7 476.7 793.3 476.7 793.3 478.3C793.3 480.3 786.7 480.3 786.7 478.3Z"/>
<path stroke="#4a4a4a" stroke-width="2.9" d="M625 452C633.3 449.5 640 451.2 646.7 454.5M625.8 453.7C633.3 451.7 640 453 645.8 455.3M623.3 466.7C631.7 465 640 465 648.3 466.7M624.2 468.3C631.7 467 640 467 647.5 468.3M691.7 620L700 616.7L713.3 619.2"/>
<path fill="#c0c0be" d="M800 440L916.7 440L906.7 453.3L890 461.7L863.3 470L813.3 466.7L800 468.3Z"/>
<path fill="#cbcbc9" d="M940 450L950 466.7L963.3 473.3L966.7 456.7L956.7 440L940 440ZM800 523.3C806.7 520 816.7 518.3 821.7 523.3C826.7 530 826.7 540 823.3 548.3L810 563.3L800 576.7Z"/>
<path fill="#6e6e6e" d="M800 453.3L811.7 450L813.3 461.7L800 465ZM858.3 440L866.7 440L866.7 450L860 451.7Z"/>
<path stroke="#a2a2a0" stroke-width="1.2" d="M883.3 488.3C896.7 486.7 910 483.3 920 480M800 490L805 483.3M820 446.7L833.3 443.3M840 450L855 445"/>
<path stroke="#8a8a88" stroke-width="2.3" d="M976.7 456.7C978.3 466.7 981.7 476.7 985 480M960 471.7C973.3 483.3 983.3 496.7 990 510C1000 520 1016.7 533.3 1030 553.3C1040 573.3 1045 596.7 1045 620M991.7 461.7C995 473.3 993.3 486.7 983.3 493.3M996.7 461.7C1000 470 998.3 480 995 486.7M948.3 518.3C960 530 973.3 543.3 983.3 556.7C980 563.3 976.7 570 973.3 571.7M943.3 530C953.3 540 966.7 553.3 976.7 566.7M976.7 566.7C986.7 583.3 1000 603.3 1010 620M988.3 550L981.7 560"/>
<path stroke="#7a7a7a" stroke-width="1.5" d="M816.7 473.3C815 486.7 816.7 498.3 821.7 506.7M826.7 476.7C833.3 483.3 843.3 491.7 855 495M823.3 480L826.7 473.3M825 478.3L828.3 475M888.3 450.8C888.3 449.2 898.3 449.2 898.3 450.8C898.3 452.8 888.3 452.8 888.3 450.8ZM882 457.5C882 456.2 888 456.2 888 457.5C888 459.2 882 459.2 882 457.5ZM866.7 528.3L850 550M821.7 526.7C816.7 533.3 810 540 805 546.7M800 523.3C806.7 520 816.7 518.3 821.7 523.3C826.7 530 826.7 540 823.3 548.3L826.7 551.7M800 546.7C806.7 556.7 816.7 563.3 830 563.3M800 585C816.7 588.3 833.3 586.7 843.3 583.3M900 571.7L910 566.7M826.7 613.3C833.3 606.7 840 606.7 850 620M913.3 590C916.7 600 920 610 916.7 620M926.7 590C933.3 600 936.7 610 938.3 620M956.7 440C950 450 950 460 953.3 466.7L963.3 473.3"/>
<path stroke="#5e5e5e" stroke-width="2.0" d="M810 471.7C816.7 468.3 830 465 843.3 465L863.3 470L890 461.7L906.7 453.3L910 458.3L930 445C938.3 450 943.3 460 946.7 473.3C950 490 946.7 503.3 936.7 515M811.7 470C810 483.3 813.3 500 818.3 510C821.7 515 825 518.3 821.7 526.7M866.7 471.7C870 476.7 873.3 480 878.3 481.7C890 480 900 476.7 910 470L910 458.3M870 471.7L873.3 478.3M876.7 470L878.3 479.2M883.3 468.3L884.2 477.5M890 466.7L891.7 475.8M896.7 465L898.3 473.3M903.3 462.5L905.8 470.8M864.2 460C865.8 458.3 869.2 458.3 870 460.8L871.7 465M821.7 510C833.3 518.3 850 521.7 866.7 520C886.7 516.7 906.7 510 926.7 506.7C933.3 510 933.3 513.3 931.7 518.3M926.7 513.3L931.7 518.3M856.7 533.3L866.7 528.3C883.3 523.3 903.3 520 920 515L931.7 518.3C930 526.7 925 533.3 916.7 540M878.3 540L886.7 526.7L906.7 523.3L900 538.3ZM883.3 536.7L889.2 530L900.8 528.3L897.5 535.8ZM823.3 550C843.3 556.7 870 555 893.3 548.3C906.7 545 913.3 540 916.7 540M826.7 556.7C850 563.3 876.7 560 900 553.3L916.7 546.7M913.3 546.7C916.7 556.7 926.7 573.3 933.3 590C938.3 603.3 936.7 613.3 933.3 620M810 563.3C833.3 570 866.7 568.3 893.3 561.7L910 556.7M800 576.7C826.7 583.3 866.7 578.3 900 571.7M810 620C813.3 603.3 820 593.3 833.3 588.3C856.7 581.7 886.7 576.7 906.7 575C916.7 576.7 923.3 583.3 926.7 590M821.7 620C825 608.3 833.3 600 846.7 596.7C866.7 590 890 586.7 908.3 585C915 588.3 920 593.3 923.3 600M955 440C953.3 446.7 958.3 453.3 966.7 456.7L976.7 455L985 463.3L996.7 456.7L1006.7 440"/>
<path stroke="#4a4a4a" stroke-width="2.9" d="M968.3 441.7C975 443.3 981.7 441.7 985 440M1110.3 457.2L1111.3 457.8"/>
<path stroke="#a2a2a0" stroke-width="1.2" d="M526.7 653.3L528.3 673.3M530 713.3C526.7 723.3 525 733.3 526.7 743.3M613.3 763.3C616.7 776.7 623.3 790 630 800M620 750C613.3 766.7 606.7 783.3 603.3 800M600 640L603.3 653.3M703.3 653.3L710 656.7M705 658.3L711.7 660.8M706.7 663.3L713.3 664.2M713.3 666.7L716.7 661.7M720 666.7L721.7 661.7M726.7 665L726.7 660M730 661.7L729.2 657.5M700 640L708.3 645"/>
<path stroke="#8a8a88" stroke-width="2.3" d="M570 786.7C576.7 780 583.3 778.3 593.3 778.3M580 780L583.3 790L590 796.7M530 766.7C535 773.3 540 780 543.3 786.7C546.7 793.3 553.3 796.7 560 795M593.3 780L596.7 800M553.3 768.3L566.7 770"/>
<path stroke="#7a7a7a" stroke-width="1.5" d="M546.7 620C553.3 633.3 561.7 646.7 566.7 663.3C570 676.7 570.8 693.3 570.8 713.3M540 650C543.3 656.7 548.3 663.3 553.3 666.7M588.3 620L586.7 630M538.3 700C550 710 566.7 715 583.3 710M546.7 726.7C540 740 536.7 753.3 538.3 766.7M566.7 733.3C580 736.7 588.3 743.3 591.7 753.3M640 693.3L650 710M643.3 678.3C650 690 660 700 673.3 706.7M673.3 733.3C683.3 730 696.7 726.7 710 723.3M680 736.7L703.3 730M653.3 650L666.7 660M651.7 666.7L670 683.3M655 641.7L668.3 655M718.3 640C723 640 726.7 643.7 726.7 648.3C726.7 653 723 656.7 718.3 656.7C713.7 656.7 710 653 710 648.3C710 643.7 713.7 640 718.3 640ZM693.3 656.7C696.7 666.7 703.3 673.3 710 678.3M688.3 683.3C695 690 703.3 691.7 711.7 688.3M696.7 670C701.7 676.7 708.3 680 716.7 680M740 650C740 660 736.7 670 735 676.7"/>
<path stroke="#5e5e5e" stroke-width="2.0" d="M535 620C533.3 630 535 640 536.7 650C538.3 666.7 538.3 686.7 536.7 703.3C533.3 716.7 530 733.3 528.3 750C530 760 535 770 540 780C543.3 790 550 796.7 556.7 800M600 620C593.3 630 586.7 643.3 583.3 656.7C580 670 580 686.7 583.3 703.3L586.7 723.3C590 730 593.3 740 595 750C596.7 760 595 770 593.3 780M536.7 703.3C543.3 713.3 553.3 723.3 563.3 730L573.3 721.7L583.3 721.7C588.3 728.3 593.3 736.7 595 746.7M563.3 756.7L566.7 750L565 763.3L570 765L573.3 761.7L578.3 773.3L573.3 780L570 786.7L566.7 793.3M540 770L546.7 783.3L553.3 786.7M626.7 693.3C616.7 706.7 606.7 723.3 596.7 740L595 750M626.7 693.3C628.3 686.7 633.3 681.7 643.3 678.3M626.7 693.3C626.7 706.7 633.3 723.3 646.7 736.7C656.7 746.7 666.7 750 680 750C693.3 748.3 703.3 743.3 706.7 733.3M630 706.7C640 720 653.3 730 670 735C683.3 736.7 696.7 733.3 706.7 726.7M650 710C663.3 720 676.7 723.3 690 723.3C703.3 721.7 713.3 716.7 720 710M706.7 733.3L713.3 723.3C721.7 713.3 728.3 700 730 686.7M720 710C726.7 700 730 690 733.3 678.3M656.7 620L653.3 625L656.7 630L653.3 636.7L656.7 641.7L646.7 646.7L648.3 656.7L653.3 663.3L646.7 676.7L643.3 678.3M656.7 630C663.3 636.7 668.3 641.7 671.7 643.3M685 623.3C695 620 713.3 620 726.7 625C736.7 630 740 640 740 650C740 663.3 733.3 676.7 726.7 686.7C716.7 696.7 703.3 703.3 690 701.7C680 698.3 676.7 693.3 675 686.7C670 673.3 666.7 656.7 670 643.3C673.3 633.3 678.3 626.7 685 623.3ZM681.7 703.3L695 710M740 650L743.3 648.3L745 636.7L740 623.3L733.3 620M750 620L745 636.7M663.3 620C668.3 625 673.3 628.3 680 626.7M696.7 750C690 763.3 680 780 670 800M666.7 751.7L656.7 776.7L660 777.5L669.2 753.3"/>
<path stroke="#4a4a4a" stroke-width="2.9" d="M661.7 620L676.7 631.7M676.7 693.3C680 703.3 688.3 708.3 696.7 706.7C710 703.3 720 696.7 726.7 686.7"/>
<path stroke="#a2a2a0" stroke-width="1.2" d="M913.3 678.3L921.7 676.7M870 670L873.3 680M828.3 675L870 695M826.7 681.7L893.3 713.3M825 688.3L916.7 720M825 695L916.7 726.7M826.7 701.7L915 735M828.3 708.3L913.3 743.3M830 715L911.7 751.7M836.7 721.7L910 758.3M850 730L908.3 761.7M850 676.7L828.3 700M855 678.3L826.7 708.3M860 681.7L828.3 715M865 686.7L831.7 720M816.7 683.3L825 690M886.7 706.7L920 720M1041.7 620L1041.7 640M1045 620L1045.8 636.7"/>
<path stroke="#8a8a88" stroke-width="2.3" d="M1010 620C1016.7 626.7 1021.7 635 1021.7 643.3M1021.7 643.3C1016.7 650 1010 656.7 1006.7 663.3L1006.7 675M1045 636.7C1051.7 643.3 1056.7 653.3 1055 666.7C1050 686.7 1043.3 703.3 1040 713.3C1036.7 723.3 1030 730 1025 736.7L1021.7 726.7M1030 650C1033.3 656.7 1036.7 663.3 1038.3 670M1023.3 646.7L1033.3 666.7M1046.7 650L1043.3 660M1006.7 675C1010 686.7 1015 700 1021.7 713.3L1018.3 728.3M1026.7 670C1020 680 1016.7 686.7 1020 696.7C1023.3 706.7 1026.7 710 1023.3 720M1040 706.7C1033.3 710 1028.3 716.7 1025 726.7M981.7 681.7C986.7 675 995 671.7 1001.7 673.3L996.7 683.3L985 683.3ZM981.7 693.3C983.3 690 990 690 993.3 693.3L991.7 700M983.3 703.3C986.7 700 993.3 701.7 996.7 706.7L993.3 716.7L985 716.7ZM998.3 690L1008.3 688.3M998.3 695L1008.3 693.3M998.3 700L1008.3 698.3M1000 713.3C1003.3 720 1000 726.7 996.7 730C993.3 736.7 991.7 743.3 990 746.7M990 746.7C996.7 743.3 1001.7 736.7 1008.3 730L1016.7 720M1000 726.7L1005 733.3"/>
<path stroke="#7a7a7a" stroke-width="1.5" d="M825 630C830 628.3 835 630 836.7 631.7M823.3 656.7C830 665 841.7 668.3 850 675M800 620L803.3 630M850 620C860 630 870 646.7 871.7 663.3M881.7 630C886.7 623.3 900 620 906.7 623.3C916.7 633.3 926.7 646.7 930 656.7M880 640C883.3 653.3 886.7 663.3 886.7 670L883.3 700M863.3 676.7C866.7 670 873.3 666.7 880 670L886.7 676.7M886.7 670C890 663.3 893.3 661.7 900 663.3M903.3 666.7L910 680L906.7 706.7M935 661.7L936.7 678.3M930 620L940 650"/>
<path stroke="#5e5e5e" stroke-width="2.0" d="M800 626.7L806.7 640L810 650L823.3 656.7L826.7 663.3L823.3 671.7L836.7 675L850 675C856.7 683.3 863.3 690 870 693.3L880 700L885 703.3L893.3 701.7L903.3 710L916.7 706.7L926.7 703.3L931.7 693.3L933.3 685L938.3 680L940 660M920 659.2L930 655.8L938.3 660M930 655.8L933.3 685M920 620C926.7 630 933.3 640 938.3 653.3M823.3 671.7C820 690 820 713.3 825 736.7C830 756.7 840 780 850 800M923.3 706.7C916.7 723.3 913.3 743.3 913.3 763.3C915 776.7 916.7 790 920 800"/>
<path stroke="#4a4a4a" stroke-width="2.9" d="M816.7 620L820.8 648.3M900 663.3L920 659.2L926.7 670L931.7 693.3M900 663.3L895 673.3L886.7 701.7"/>
<path stroke="#b6b6b4" stroke-width="1.0" d="M603.3 800C596.7 813.3 590 826.7 586.7 843.3M530 912.5C536.7 912.5 543.3 911.7 547.5 910.3M586.7 860L600 859.2"/>
<path stroke="#a2a2a0" stroke-width="1.2" d="M573.3 813.3C571.7 833.3 568.3 866.7 565 893.3L561.7 923.3"/>
<path stroke="#8a8a88" stroke-width="2.3" d="M555 800L560 803.3L568.3 801.7M560 810L570 812.5M573.3 806.7L575.8 820L578.3 811.7ZM588.3 800L591.7 805L596.7 801.7M590 880C596.7 875 606.7 873.3 615 876.7M575 923.3C583.3 913.3 593.3 906.7 606.7 905C616.7 908.3 625 916.7 630 923.3M576.7 920C586.7 910 596.7 905 603.3 902.5M599.2 976.7L608.3 953.3L610.8 943.3M606.7 956.7L610 955.8M568.3 955C570 965 576.7 971.7 586.7 975M638.3 888.3C655 886.7 671.7 885.8 688.3 885.3M636.7 893.3C653.3 895 670 895.8 683.3 895.8C693.3 895.8 703.3 897.5 710 900M638.3 915C650 915 660 914.2 666.7 911.7L665 910M635 900L636.7 906.7M526.7 894.2L535 893.7"/>
<path stroke="#7a7a7a" stroke-width="1.5" d="M571.7 810C568.3 833.3 565 866.7 561.7 893.3C560 906.7 559.2 916.7 558.3 923.3"/>
<path stroke="#5e5e5e" stroke-width="2.0" d="M665 800C656.7 816.7 646.7 836.7 640 856.7C635 870 631.7 883.3 630 896.7C628.3 906.7 628.3 913.3 630 920L633.3 946.7"/>
<path stroke="#4a4a4a" stroke-width="2.9" d="M558.3 923.3C563.3 933.3 566.7 936.7 568.3 940C570 950 570 960 576.7 970C583.3 975.8 591.7 978.3 598.7 978.7L599.7 988L608 981.5C618.3 975 626.7 968.3 630.2 961.2M568.3 933.3C570 916.7 576.7 896.7 590 880C600 873.3 610 871.7 616.7 875C623.3 881.7 628.3 893.3 628.3 906.7C630 920 631.7 933.3 633.3 946.7"/>
<path stroke="#b6b6b4" stroke-width="1.0" d="M883.3 873.3C886.7 863.3 890 856.7 893.3 850M923.3 828.3C926.7 833.3 930 838.3 931.7 841.7M888.3 838.3L891.7 833.3"/>
<path stroke="#8a8a88" stroke-width="2.3" d="M893.3 876.7C900 863.3 910 851.7 920 846.7L935 845M943.3 916.7L938.3 914.2L950 915"/>
<path stroke="#7a7a7a" stroke-width="1.5" d="M860 838.3C861.7 850 863.3 860 865 868.3M890 863.3C890.8 870 891.3 876.7 891.7 881.7M921.7 878.3C930 883.3 938.3 888.3 943.3 891.7L942.5 900L946.7 910"/>
<path stroke="#5e5e5e" stroke-width="2.0" d="M849.2 800C853.3 813.3 857.5 826.7 860 838.3L850.8 846.7L855 858.3L854.2 868.3L861.7 870"/>
<path stroke="#4a4a4a" stroke-width="2.9" d="M861.7 870C871.7 873.3 881.7 878.3 890 885C893.3 893.3 900 900 906.7 903.3C916.7 910 930 915 943.3 916.7L950 920M920 800C925 806.7 929.2 815 930 825L928.3 830M890 883.3C886.7 870 890 855 900 840L911.7 820L916.7 819.2L923.3 825C933.3 838.3 943.3 856.7 950 873.3C955 886.7 958.3 898.3 960 906.7L955 910L946.7 911.7"/>
<path fill="#d5d5d3" d="M631.9 170L658.3 170C652.8 183.9 651.4 204.7 655.6 225.6C656.9 232.5 659.7 236.7 662.5 239.4L661.1 250.6L655.6 253.3L645.8 242.2L634.7 245L633.3 225.6C631.9 204.7 633.3 183.9 631.9 170Z"/>
<path fill="#c0c0be" d="M658.3 170L760 170L760 320L661.1 320C658.3 303.3 652.8 286.7 645.8 272.8L636.1 258.9L634.7 245L645.8 242.2L655.6 253.3L661.1 250.6L662.5 239.4C659.7 236.7 656.9 232.5 655.6 225.6C651.4 204.7 652.8 183.9 658.3 170Z"/>
<path fill="#d5d5d3" d="M713.9 170L760 170L760 193.6L733.3 195.7C727.8 190.8 722.2 183.9 713.9 175.6Z"/>
<path fill="#c0c0be" d="M619.4 210.3L625 210.3L633.3 217.2L636.1 256.1L633.3 258.9L620.8 245Z"/>
<path fill="#adadab" d="M655.6 172.8L662.5 170L713.9 170L711.1 178.3L686.1 182.5L675 183.9L672.2 195L655.6 190.8Z"/>
<path fill="#cbcbc9" d="M686.1 182.5L711.1 178.3L733.3 195L708.3 197.8L702.8 206.1L688.9 196.4L675 203.3L672.2 195L675 183.9ZM673.6 204.7L688.9 196.4L697.2 201.9L708.3 215.8L697.2 217.2L688.9 222.8L681.9 220ZM688.9 222.8L697.2 217.2L705.6 218.6C713.9 228.3 720.8 239.4 725 253.3C725.7 261.7 720.8 265.8 713.9 265.8L705.6 260.3C700 247.8 694.4 235.3 688.9 228.3ZM672.2 236.7L688.9 225.6L691.7 229.7L683.3 247.8L677.8 281.1L666.7 281.1C666.7 267.2 668.1 250.6 672.2 236.7ZM688.9 239.4L697.2 256.1L705.6 261.7L711.1 267.2L719.4 270L713.9 289.4L700 292.2L695.8 281.1L688.9 279.7L677.8 281.1L683.3 247.8ZM708.3 197.8L733.3 195L760 193.6L760 222.8L725 225.6L719.4 217.2ZM720.8 228.3L747.2 224.2L748.6 231.1L722.2 235.3ZM722.2 239.4L750 233.9L752.8 242.2L725 247.8ZM701.4 303.3L708.3 297.8L718.1 303.3L715.3 313.1L705.6 311.7Z"/>
<path fill="#adadab" d="M760 197.8C751.4 201.9 745.8 214.4 747.2 228.3C748.6 242.2 752.8 251.9 760 256.1Z"/>
<path fill="#6e6e6e" d="M719.4 267.2L729.2 261.7L760 253.3L760 258.9L733.3 267.2L731.9 275.6L722.2 276.9Z"/>
<path fill="#adadab" d="M722.2 279.7L733.3 275.6L744.4 281.1L747.2 292.2L729.2 304.7L718.1 293.6ZM747.2 281.1L760 275.6L760 295L750 292.2ZM666.7 281.1L677.8 281.1L688.9 279.7L695.8 281.1L700 292.2L697.2 308.9L705.6 320L675 320C672.2 306.1 668.1 292.2 666.7 281.1Z"/>
<path stroke="#a2a2a0" stroke-width="1.2" d="M625 258.9L600 286.7M619 270.7C619 267.9 626.8 267.9 626.8 270.7C626.8 273.8 619 273.8 619 270.7ZM641.7 190.8L647.2 197.8M641 204.7L647.2 211.7M600 295L602.8 295.7L601.4 297.8Z"/>
<path stroke="#7a7a7a" stroke-width="1.5" d="M608.3 170C609.7 178.3 611.1 185.3 609.7 190.8M643.3 256.4C643.3 254.4 646.9 254.4 646.9 256.4C646.9 258.6 643.3 258.6 643.3 256.4ZM651.4 288.8C651.4 286.4 655.6 286.4 655.6 288.8C655.6 291.4 651.4 291.4 651.4 288.8ZM636.1 264.4L640.3 267.2M638.2 267.2L641.7 269.3M655.6 260.3L656.9 261.7M651.4 170C644.4 186.7 643.1 206.1 647.2 228.3L650 236.7M661.1 211.7L665.3 222.8M658.3 171.4L656.9 189.4M662.5 170.7L661.1 190.8M666.7 170L665.3 192.2M670.8 170L669.4 193.6M675 170L674.3 183.9M679.2 170L678.5 183.2M683.3 170L682.9 182.8M687.5 170L687.2 182.2M691.7 170L691.4 181.7M695.8 170L695.6 180.8M700 170L699.7 180.3M704.2 170L703.9 179.4M708.3 170L708.1 178.6M709.7 253.3C712.5 250.6 718.1 249.2 722.2 250.6M709 250.6L709.7 251.9M710.4 256.1L711.1 257.5M697.2 201.9L705.6 218.6M673.6 264.4L677.8 261.7L679.2 275.6L675.7 279.7ZM760 206.1C754.2 210.3 751.4 218.6 752.1 228.3C752.8 238.1 755.6 245 760 249.2M725.7 282.5L732.6 279.7L741 283.9L743.1 290.8L729.9 300.6L722.2 292.2ZM752.5 315.8C752.5 314.4 755.8 314.4 755.8 315.8C755.8 317.8 752.5 317.8 752.5 315.8ZM736.1 303.3L738.9 320M658.3 297.8L661.1 308.9"/>
<path stroke="#5e5e5e" stroke-width="2.0" d="M600 189.4L608.3 190.8L618.1 189.4L620.8 196.4L613.9 197.8L609.7 201.9M618.1 189.4C620.8 195 622.9 201.9 624.3 206.1M619.4 210.3L625 210.3L633.3 217.2L636.1 256.1L633.3 258.9L620.8 245ZM625 260C636.1 272.8 645.8 295 651.4 320M633.3 260C644.4 275.6 652.8 297.8 656.9 320M645.8 170C638.9 183.9 636.1 203.3 640.3 228.3C641.7 236.7 645.8 245 652.8 253.3M658.3 170C652.8 183.9 651.4 204.7 655.6 225.6C656.9 232.5 659.7 236.7 662.5 239.4M634.7 245L645.8 242.2L655.6 253.3L661.1 250.6M655.6 203.3L663.9 200.6L672.2 203.3L669.4 222.8L663.9 224.2M655.6 190.8L672.2 195L675 183.9L686.1 182.5L711.1 178.3L713.9 170M713.9 175.6C722.2 183.9 727.8 190.8 733.3 195.7L760 193.6M722.2 183.9C720.8 178.3 722.2 174.2 726.4 172.1M736.1 188.1C734.7 182.5 737.5 181.1 744.4 179.7L760 176.9M673.6 204.7L688.9 196.4L697.2 201.9L708.3 215.8M681.9 220L688.9 222.8L697.2 217.2L705.6 218.6C713.9 228.3 720.8 239.4 725 253.3C725.7 261.7 720.8 265.8 713.9 265.8L705.6 260.3C700 247.8 694.4 235.3 688.9 228.3L688.9 222.8M675 203.3L681.9 220M672.2 195L675 203.3M686.1 182.5L688.9 196.4M711.1 178.3L733.3 195M708.3 197.8L733.3 195M708.3 197.8L719.4 217.2L725 225.6M672.2 236.7L688.9 225.6M672.2 236.7C668.1 250.6 666.7 267.2 666.7 281.1M683.3 247.8L688.9 239.4L697.2 256.1L705.6 261.7L711.1 267.2L719.4 270L713.9 289.4L700 292.2L695.8 281.1L688.9 279.7L686.1 279.7L683.3 282.5L677.8 281.1L683.3 247.8M666.7 281.1L677.8 281.1M719.4 217.2L760 215.8M725 225.6L760 222.8M720.8 228.3L747.2 224.2L748.6 231.1L722.2 235.3ZM722.2 239.4L750 233.9L752.8 242.2L725 247.8ZM701.4 303.3L708.3 297.8L718.1 303.3L715.3 313.1L705.6 311.7ZM666.7 281.1C668.1 292.2 672.2 306.1 675 320M669.4 308.9L677.8 313.1L694.4 310.3L702.8 314.4M700 292.2L697.2 308.9L705.6 320M750.3 315.8C750.3 312.5 758.1 312.5 758.1 315.8C758.1 319.7 750.3 319.7 750.3 315.8Z"/>
<path stroke="#4a4a4a" stroke-width="2.9" d="M760 197.8C751.4 201.9 745.8 214.4 747.2 228.3C748.6 242.2 752.8 251.9 760 256.1M722.2 279.7L733.3 275.6L744.4 281.1L747.2 292.2L729.2 304.7L718.1 293.6ZM747.2 281.1L760 275.6M747.2 292.2L750 292.2L760 295M719.4 270L722.2 279.7M729.2 304.7L736.1 303.3L760 295"/>
<path fill="#c0c0be" d="M700 188.1L713.9 193.6L733.3 196.4L772.2 193.6L777.8 190.8L795.8 185.3L819.4 199.2L833.3 207.5L838.9 211.7L852.8 211.7L852.8 320L700 320Z"/>
<path fill="#cbcbc9" d="M700 197.8L708.3 196.4L719.4 203.3L720.8 215.8L716.7 225.6L700 220ZM720.8 215.8L727.8 210.3L745.8 208.9L747.2 215.8L744.4 222.8L725 225.6ZM722.2 228.3L747.2 225.6L748.6 233.9L723.6 236.7ZM725 239.4L748.6 236.7L750 245L727.8 247.8ZM700 225.6C708.3 228.3 716.7 236.7 722.2 247.8C725 256.1 722.2 264.4 713.9 265.8C708.3 265.8 702.8 261.7 700 258.9ZM700 300.6L711.1 295L718.1 303.3L715.3 314.4L704.2 320L700 320Z"/>
<path fill="#6e6e6e" d="M722.2 267.2C727.8 264.4 741.7 261.7 755.6 260.3L758.3 265.8L736.1 270L727.8 275.6L720.8 275.6Z"/>
<path fill="#adadab" d="M736.1 270L772.2 264.4L777.8 272.8L775 286.7L750 290.8L745.8 281.1ZM720.8 281.1L733.3 276.9L745.8 281.1L750 290.8L744.4 303.3L727.8 306.1L719.4 295ZM747.2 292.2L775 288.1L777.8 295L769.4 303.3L758.3 307.5ZM748.6 225.6C747.2 211.7 755.6 201.9 769.4 199.9C780.6 199.9 788.9 206.1 790.3 215.8L786.1 220C783.3 228.3 783.3 239.4 777.8 247.8C772.2 256.1 763.9 258.9 758.3 253.3C751.4 245 748.6 235.3 748.6 225.6Z"/>
<path fill="#c0c0be" d="M822.2 222.8C833.3 225.6 844.4 233.9 850 242.2C852.8 250.6 850 261.7 841.7 272.8C833.3 281.1 827.8 292.2 825 303.3C822.2 295 822.2 281.1 825 267.2C827.8 253.3 825 236.7 822.2 222.8Z"/>
<path fill="#d5d5d3" d="M775 170L797.2 170L795.8 185.3L819.4 199.2C838.9 210.3 861.1 225.6 869.4 235.3C872.2 242.2 872.2 250.6 869.4 258.9C863.9 270 852.8 281.1 841.7 289.4C836.1 295 833.3 303.3 831.9 308.9L825 303.3C827.8 292.2 833.3 281.1 841.7 272.8C850 261.7 852.8 250.6 850 242.2C838.9 229.7 825 217.2 811.1 208.9C800 201.9 788.9 197.8 777.8 190.8ZM783.3 228.3C786.1 220 794.4 215.8 805.6 217.2C813.9 220 819.4 228.3 822.2 239.4C825 253.3 822.2 267.2 816.7 278.3C811.1 289.4 805.6 290.8 800 288.1C791.7 281.1 786.1 270 784.7 258.9C781.9 247.8 781.9 236.7 783.3 228.3ZM788.9 281.1L805.6 290.8L811.1 285.3C816.7 288.1 822.2 295 825 303.3L831.9 320L741.7 320C745.8 311.7 755.6 303.3 769.4 297.8L783.3 293.6Z"/>
<path fill="#cbcbc9" d="M795.8 251.9C791.7 258.9 790.3 267.2 791.7 278.3L788.9 281.1C786.1 275.6 783.3 267.2 784.7 258.9C786.1 253.3 790.3 250.6 795.8 251.9ZM783.3 228.3C786.1 220 794.4 215.8 805.6 217.2C813.9 220 819.4 228.3 822.2 239.4L813.9 247.8C815.3 242.2 813.9 236.7 811.1 233.9C805.6 229.7 797.2 228.3 791.7 235.3C788.9 239.4 788.9 245 790.3 247.8L784.7 253.3C781.9 245 781.9 236.7 783.3 228.3Z"/>
<path fill="#d5d5d3" d="M741.7 320C740.3 308.9 744.4 300.6 752.8 297.8C761.1 296.4 766.7 301.9 766.7 310.3L765.3 320Z"/>
<path fill="#969694" d="M805.6 282.5C807.6 281.1 810.4 281.1 811.8 283.2C810.4 285.3 807.6 285.3 805.6 282.5Z"/>
<path stroke="#a2a2a0" stroke-width="1.2" d="M781.9 303.3C786.1 306.1 790.3 307.5 794.4 306.1M786.1 295C788.9 300.6 794.4 303.3 800 303.3"/>
<path stroke="#7a7a7a" stroke-width="1.5" d="M775 170C777.8 175.6 780.6 183.9 783.3 190.8M783.3 170C783.3 176.9 786.1 183.9 788.9 189.4M790.3 170C788.9 175.6 791.7 181.1 795.8 185.3M815.3 204.7L811.1 215.8L819.4 222.8M847.2 245C848.6 250.6 847.2 256.1 844.4 261.7M755.6 225.6C761.1 217.2 769.4 214.4 777.8 215.8M761.1 228.3C766.7 233.9 772.2 239.4 775 247.8M769.4 222.8C775 228.3 779.2 235.3 780.6 242.2M755.6 211.7C752.8 217.2 752.8 225.6 755.6 233.9M788.9 233.9C790.3 225.6 797.2 221.4 802.8 222.8M805.6 290.8C800 289.4 795.8 283.9 791.7 278.3M795.8 251.9C791.7 258.9 790.3 267.2 791.7 278.3M811.1 270L810.4 276.9L812.5 278.3M790.3 247.8C797.2 242.2 805.6 242.2 813.9 247.8M805.6 290.8C806.9 295 809.7 299.2 811.1 303.3M772.2 295C777.8 303.3 786.1 308.9 797.2 310.3M811.1 285.3C816.7 288.1 822.2 295 825 303.3M752.5 313.8C752.5 312.2 755.8 312.2 755.8 313.8C755.8 315.6 752.5 315.6 752.5 313.8ZM741.7 272.8L769.4 268.6L772.9 274.2L770.8 283.9L752.1 287.4M708.3 253.3L713.9 251.9M705.6 247.8L706.9 253.3M725 285.3L733.3 282.5L741.7 285.3L744.4 292.2L741 300.6L729.9 302.6"/>
<path stroke="#5e5e5e" stroke-width="2.0" d="M723.6 183.9C722.2 178.3 723.6 174.2 726.4 172.1M736.8 189.4C735.4 183.9 737.5 181.8 744.4 180.4C755.6 178.3 765.3 178.3 772.2 181.1M775 172.8C777.1 175.6 777.8 179.7 777.1 183.2M700 188.1L713.9 193.6L733.3 196.4L772.2 193.6L777.8 190.8M777.8 190.8C786.1 188.1 797.2 190.8 805.6 193.6L811.1 201.9M805.6 193.6L808.3 201.9M811.1 195L815.3 204.7M795.8 185.3C802.8 188.1 811.1 192.2 819.4 199.2M819.4 199.2C838.9 210.3 861.1 225.6 869.4 235.3C872.2 242.2 872.2 250.6 869.4 258.9C863.9 270 852.8 281.1 841.7 289.4C836.1 295 833.3 303.3 831.9 308.9M811.1 208.9C825 217.2 838.9 229.7 850 242.2C852.8 250.6 850 261.7 841.7 272.8C833.3 281.1 827.8 292.2 825 303.3M748.6 225.6C748.6 236.7 752.8 247.8 758.3 253.3M752.8 215.8C758.3 208.9 766.7 206.1 775 207.5M751.4 232.5C755.6 242.2 761.1 247.8 766.7 250.6M766.7 204.7C775 204.7 783.3 210.3 786.1 217.2M758.3 253.3C763.9 258.9 772.2 256.1 777.8 247.8M783.3 228.3C786.1 220 794.4 215.8 805.6 217.2C813.9 220 819.4 228.3 822.2 239.4M813.9 236.7C816.7 242.2 816.7 245 813.9 247.8M822.2 239.4C825 253.3 822.2 267.2 816.7 278.3C813.9 285.3 809.7 289.4 805.6 290.8M784.7 258.9C783.3 267.2 786.1 275.6 788.9 281.1M783.3 228.3C781.9 236.7 781.9 247.8 784.7 258.9M797.2 263.1C801.4 261 805.6 261.7 809 264.4M814.6 263.1C817.4 261 820.1 261 822.2 262.4M805.6 282.5C807.6 281.1 810.4 281.1 811.8 283.2C810.4 285.3 807.6 285.3 805.6 282.5ZM788.9 281.1C788.9 286.7 786.1 290.8 783.3 293.6M783.3 293.6C777.8 295 772.2 296.4 769.4 297.8M769.4 297.8C761.1 301.9 755.6 307.5 752.8 314.4M825 303.3C827.8 308.9 830.6 314.4 831.9 320M750.3 313.8C750.3 310.3 758.1 310.3 758.1 313.8C758.1 317.8 750.3 317.8 750.3 313.8ZM741.7 320C740.3 308.9 744.4 300.6 752.8 297.8C761.1 296.4 766.7 301.9 766.7 310.3L765.3 320M700 197.8L708.3 196.4L719.4 203.3L720.8 215.8L716.7 225.6L700 220M720.8 215.8L727.8 210.3L745.8 208.9L747.2 215.8L744.4 222.8L725 225.6ZM722.2 228.3L747.2 225.6L748.6 233.9L723.6 236.7ZM725 239.4L748.6 236.7L750 245L727.8 247.8ZM700 225.6C708.3 228.3 716.7 236.7 722.2 247.8C725 256.1 722.2 264.4 713.9 265.8C708.3 265.8 702.8 261.7 700 258.9M700 300.6L711.1 295L718.1 303.3L715.3 314.4L704.2 320M872.2 253.3C869.4 267.2 855.6 281.1 841.7 292.2C836.1 300.6 833.3 308.9 831.9 320"/>
<path stroke="#4a4a4a" stroke-width="2.9" d="M748.6 225.6C747.2 211.7 755.6 201.9 769.4 199.9C780.6 199.9 788.9 206.1 790.3 215.8M798.6 267.2C801.4 265.8 805.6 266.5 807.6 268.6M815.3 265.8C817.4 264.4 819.4 264.4 820.8 265.8M736.1 270L772.2 264.4L777.8 272.8L775 286.7L750 290.8L745.8 281.1ZM720.8 281.1L733.3 276.9L745.8 281.1L750 290.8L744.4 303.3L727.8 306.1L719.4 295ZM747.2 292.2L775 288.1L777.8 295L769.4 303.3L758.3 307.5ZM700 283.9L713.9 290.8L720.8 281.1"/>
<path fill="#c0c0be" d="M700 320L856.9 320L863.9 403.3L863.9 470L700 470Z"/>
<path fill="#adadab" d="M700 320C708.3 331.1 716.7 347.8 722.2 367.2C727.8 389.4 730.6 408.9 731.9 431.1L719.4 425.6C716.7 397.8 711.1 361.7 700 336.7Z"/>
<path fill="#cbcbc9" d="M700 368.6L711.1 367.2L723.6 375.6L726.4 386.7L716.7 406.1L700 408.9Z"/>
<path fill="#adadab" d="M765.3 375.6L777.8 367.2L790.3 375.6L791.7 383.9L777.8 397.8L766.7 386.7ZM752.8 383.9L766.7 386.7L777.8 397.8L761.1 417.2L751.4 408.9Z"/>
<path fill="#6e6e6e" d="M750 408.9L759.7 410.3L755.6 425.6L748.6 422.8ZM727.8 320L737.5 320L727.8 329.7L726.4 325.6Z"/>
<path fill="#d5d5d3" d="M700 435.3C716.7 433.9 733.3 440.8 744.4 453.3C750 460.3 752.8 465.8 754.2 470L700 470Z"/>
<path fill="#cbcbc9" d="M838.9 458.9C847.2 455.4 855.6 453.3 863.9 452.2L863.9 470L833.3 470ZM731.9 431.1L738.9 442.2L755.6 445L761.1 470L754.2 470C750 458.9 741.7 445 731.9 439.4Z"/>
<path fill="#d5d5d3" d="M780.6 320L844.4 320C850 325.6 852.8 333.9 850 342.2C847.2 347.8 844.4 350.6 841.7 351.9C844.4 361.7 847.2 375.6 850 386.7C854.2 406.1 859.7 431.1 861.1 450.6L838.9 450.6L833.3 439.4C827.8 442.2 819.4 443.6 811.1 442.2L802.8 453.3L800 467.2C788.9 470 777.8 467.2 769.4 461.7C758.3 453.3 752.8 442.2 754.2 431.1C758.3 420 769.4 408.9 783.3 403.3C786.1 395 788.9 386.7 793.1 378.3C790.3 372.8 788.9 365.8 790.3 360.3C784.7 356.1 781.9 350.6 781.9 345C783.3 336.7 783.3 328.3 780.6 320ZM719.4 339.4C727.8 336.7 738.9 333.9 747.2 331.1L758.3 328.3L765.3 335.3C761.1 343.6 755.6 350.6 750 356.1L745.8 363.1C738.9 358.9 727.8 350.6 719.4 339.4ZM745.8 361.7C750 356.1 758.3 353.3 765.3 356.1L770.8 365.8L768.1 378.3C761.1 382.5 752.8 381.1 748.6 375.6ZM741.7 320L765.3 320C765.3 325.6 761.1 329.7 755.6 331.1L747.2 331.1C743.1 328.3 741.7 324.2 741.7 320Z"/>
<path fill="#6e6e6e" d="M795.8 464.4L802.8 453.3L811.1 451.9L813.9 464.4L805.6 470L795.8 470Z"/>
<path stroke="#a2a2a0" stroke-width="1.2" d="M805.6 403.3C802.8 414.4 802.8 425.6 805.6 435.3M788.9 411.7C794.4 417.2 797.2 425.6 797.2 433.9M825 417.2C827.8 422.8 829.2 428.3 827.8 433.9M830.6 436.7L825 445L833.3 442.2"/>
<path stroke="#7a7a7a" stroke-width="1.5" d="M708.3 320C719.4 339.4 727.8 367.2 733.3 397.8M700 417.2C708.3 414.4 716.7 417.2 722.2 425.6L725 436.7M708.3 439.4C719.4 440.8 730.6 447.8 738.9 458.9M741.7 460.3L743.1 465.8M783.3 325.6C791.7 331.1 802.8 336.7 811.1 343.6C816.7 347.8 820.8 350.6 823.6 346.4M825 340.8C830.6 336.7 836.1 328.3 838.9 320M811.1 361.7C816.7 370 819.4 378.3 822.2 386.7M827.8 356.1C830.6 367.2 833.3 378.3 833.3 389.4M838.9 356.1C841.7 367.2 844.4 378.3 844.4 389.4M816.7 383.9C813.9 389.4 811.1 395 811.1 400.6M822.2 386.7C827.8 392.2 833.3 395 838.9 397.8M793.1 378.3C797.2 386.7 802.8 395 805.6 403.3C806.9 411.7 805.6 417.2 802.8 422.8M838.9 397.8C836.1 408.9 833.3 420 830.6 431.1C827.8 436.7 825 440.8 822.2 442.2M797.2 338.1C798.6 340.8 801.4 342.2 804.2 340.8"/>
<path stroke="#5e5e5e" stroke-width="2.0" d="M700 320C708.3 331.1 716.7 347.8 722.2 367.2C727.8 389.4 730.6 408.9 731.9 431.1M700 368.6L711.1 367.2L723.6 375.6L726.4 386.7L716.7 406.1L700 408.9M731.9 431.1L738.9 442.2L755.6 445M704.6 375.6C704.6 372.8 707.9 372.8 707.9 375.6C707.9 378.9 704.6 378.9 704.6 375.6ZM702.5 385.3C702.5 382.5 705.8 382.5 705.8 385.3C705.8 388.6 702.5 388.6 702.5 385.3ZM710.1 388.1C710.1 385.3 713.5 385.3 713.5 388.1C713.5 391.4 710.1 391.4 710.1 388.1ZM777.8 367.2L765.3 375.6L766.7 386.7M765.3 375.6L752.8 383.9M777.8 367.2L790.3 375.6L791.7 383.9L777.8 397.8M719.4 339.4C727.8 336.7 738.9 333.9 747.2 331.1L758.3 328.3M726.4 356.1C734.7 353.3 741.7 349.2 747.2 345M740.3 320C740.3 324.2 741.7 328.3 747.2 331.1M765.3 320C765.3 325.6 761.1 329.7 755.6 331.1M745.8 361.7C750 356.1 758.3 353.3 765.3 356.1L770.8 365.8L768.1 378.3C761.1 382.5 752.8 381.1 748.6 375.6ZM755.6 360.3L758.3 375.6M761.1 358.9L763.9 375.6M765.3 335.3C761.1 343.6 755.6 350.6 750 356.1M700 435.3C716.7 433.9 733.3 440.8 744.4 453.3C750 460.3 752.8 465.8 754.2 470M740.3 447.8L741.7 456.1M745.8 449.2L747.2 457.5M751.4 450.6L752.8 458.9M781.9 345C783.3 353.3 794.4 358.9 805.6 358.9C815.3 357.5 820.8 351.9 823.6 346.4M823.6 346.4C833.3 351.9 844.4 350.6 850 342.2C852.8 333.9 850 325.6 844.4 320M780.6 320C783.3 328.3 783.3 336.7 781.9 345M841.7 351.9C844.4 361.7 847.2 375.6 850 386.7M805.6 370C811.1 375.6 816.7 381.1 825 383.9C830.6 386.7 836.1 392.2 838.9 397.8M790.3 360.3C788.9 365.8 790.3 372.8 793.1 378.3C788.9 386.7 786.1 395 783.3 403.3M777.8 428.3C786.1 431.1 794.4 439.4 800 450.6L802.8 453.3M811.1 442.2C808.3 445 805.6 447.8 802.8 453.3M808.3 433.9C813.9 429.7 820.8 431.1 822.2 435.3C819.4 440.8 813.9 442.2 811.1 442.2M802.8 453.3L800 467.2M811.1 451.9L813.9 464.4M850 320C852.8 333.9 855.6 347.8 856.9 361.7L863.9 403.3M838.9 458.9C847.2 455.4 855.6 453.3 863.9 452.2"/>
<path stroke="#4a4a4a" stroke-width="2.9" d="M718.1 336.7L727.8 328.3L737.5 320M727.8 328.3L740.3 353.3L743.1 365.8L752.8 383.9L751.4 408.9M752.8 383.9L777.8 397.8L761.1 417.2M751.4 408.9C750 417.2 750 428.3 754.2 431.1M790.3 383.9L795.8 395M786.1 392.2L791.7 400.6M783.3 403.3C769.4 408.9 758.3 420 754.2 431.1C752.8 442.2 758.3 453.3 769.4 461.7C777.8 467.2 788.9 470 800 467.2M850 386.7C854.2 406.1 859.7 431.1 861.1 450.6"/>
<path fill="#c0c0be" d="M660 420L920 420L920 519.9L660 519.9Z"/>
<path fill="#d5d5d3" d="M660 420L670.8 420C673.5 433.5 674.9 447.1 673.5 460.6L660 479.6Z"/>
<path fill="#cbcbc9" d="M674.9 420L692.5 420L693.9 433.5L676.2 447.1ZM739.9 445.7L757.5 443L760.2 456.6L746.7 459.3ZM863.1 420L884.8 420L890.2 439L871.2 445.7L865.8 433.5Z"/>
<path fill="#adadab" d="M754.8 464.7L787.3 466L809 470.1L806.2 487.7L768.3 491.8L762.9 479.6Z"/>
<path fill="#969694" d="M772.4 471.2C772.4 468.7 781.9 468.7 781.9 471.2C781.9 473.9 772.4 473.9 772.4 471.2ZM760.9 479.3C760.9 476.9 770.4 476.9 770.4 479.3C770.4 482 760.9 482 760.9 479.3ZM785 478.5C785 476.1 794.5 476.1 794.5 478.5C794.5 481.2 785 481.2 785 478.5Z"/>
<path fill="#cbcbc9" d="M768.3 495.8L806.9 492.4L814.4 519.9L772.4 519.9Z"/>
<path fill="#d5d5d3" d="M660 479.6C662.7 468.7 673.5 452.5 687.1 441.7C697.9 434.9 714.2 433.5 725 440.3C741.2 452.5 754.8 471.5 762.9 490.4C768.3 504 771 514.8 772.4 519.9L660 519.9ZM753.4 420L855 420L859.1 447.1C849.6 452.5 836 455.2 822.5 457.9L813 453.9L809 451.1L800.8 452.5L794.1 464.7C781.9 460.6 768.3 453.9 761.6 444.4C756.1 436.2 753.4 428.1 753.4 420Z"/>
<path fill="#6e6e6e" d="M794.1 464.7L802.2 452.5L809 451.1L814.4 460.6L811.7 464.7ZM855 420L859.1 447.1L865.8 449.8L863.1 420Z"/>
<path fill="#cbcbc9" d="M827.9 459.3L871.2 448.4L890.2 445.7L903.7 447.1L909.2 456.6L890.2 463.3L863.1 467.4L849.6 466Z"/>
<path fill="#d5d5d3" d="M809 471.5C822.5 466 836 464.7 849.6 466L863.1 467.4L890.2 463.3L909.2 456.6L911.9 452.5L920 447.1L920 519.9L814.4 519.9L813 506.7C809 495.8 807.6 482.3 809 471.5Z"/>
<path stroke="#b6b6b4" stroke-width="1.0" d="M735.8 508L741.2 506.7L745.3 513.4"/>
<path stroke="#7a7a7a" stroke-width="1.5" d="M664.1 420C666.8 433.5 668.1 447.1 666.8 457.9M674.9 460.6C687.1 444.4 704.7 436.2 719.6 437.6M664.1 504C670.8 485 687.1 474.2 700.6 476.9C708.7 479.6 714.2 485 714.2 490.4L719.6 495.8M691.1 498.5C693.9 497.2 697.9 499.9 699.3 504M719.6 441.7L723.6 445.7M722.3 440.3L726.4 444.4M741.2 462L745.3 466M753.4 474.2L757.5 478.2M754.8 479.6L758.8 482.3M775.1 497.2L780.5 502.6L775.1 508M802.2 470.1L807.6 476.9M765.6 451.1C776.5 452.5 790 452.5 800.8 452.5M823.8 436.2L829.3 447.1M826.6 433.5L833.3 444.4M829.3 428.1L840.1 425.4M849.6 433.5C849.6 439 850.9 447.1 852.3 451.1M762.9 433.5C768.3 428.1 773.7 425.4 779.2 425.4M811.7 474.2C810.3 485 811.7 495.8 815.7 506.7M819.8 474.2C827.9 479.6 836 485 846.9 487.7M888.8 450.5C888.8 448.8 899.7 448.8 899.7 450.5C899.7 452.4 888.8 452.4 888.8 450.5ZM881.4 458.6C881.4 457.2 888.2 457.2 888.2 458.6C888.2 460.2 881.4 460.2 881.4 458.6ZM895.6 433.5L920 440.3M882.1 487.7C892.9 486.4 903.7 482.3 914.6 476.9"/>
<path stroke="#5e5e5e" stroke-width="2.0" d="M660 479.6C662.7 468.7 673.5 452.5 687.1 441.7C697.9 434.9 714.2 433.5 725 440.3C741.2 452.5 754.8 471.5 762.9 490.4C768.3 504 771 514.8 772.4 519.9M670.8 420C673.5 433.5 674.9 447.1 673.5 460.6L660 479.6M713.5 497.2C713.5 495.2 718.9 497.9 718.2 499.9C717.5 502.6 712.8 499.9 713.5 497.2ZM692.5 501.2C694.5 500.6 696.6 502.6 696.6 504.6M674.9 420L676.2 447.1L693.9 433.5L692.5 420M727.7 420L735.8 444.4L753.4 440.3L748 420M739.9 445.7L757.5 443L760.2 456.6L746.7 459.3ZM743.3 449.8L744.6 457.9M749.4 447.8L750.7 455.9M754.8 464.7L787.3 466L809 470.1L806.2 487.7L768.3 491.8L762.9 479.6ZM772.4 471.2C772.4 468.7 781.9 468.7 781.9 471.2C781.9 473.9 772.4 473.9 772.4 471.2ZM760.9 479.3C760.9 476.9 770.4 476.9 770.4 479.3C770.4 482 760.9 482 760.9 479.3ZM785 478.5C785 476.1 794.5 476.1 794.5 478.5C794.5 481.2 785 481.2 785 478.5ZM768.3 491.8L772.4 519.9M806.2 487.7L809 519.9M779.2 425.4C787.3 430.8 795.4 439 800.8 452.5M800.8 420C802.2 430.8 802.2 441.7 800.8 452.5M806.2 433.5C811.7 430.8 818.4 430.8 822.5 433.5C819.8 439 814.4 441.7 809 443M822.5 457.9C836 455.2 849.6 451.1 860.4 447.1M814.4 460.6C830.6 457.9 849.6 453.9 863.1 449.8M863.1 420L865.8 433.5L871.2 445.7L890.2 439L884.8 420M869.2 434.9C869.2 432.2 873.3 432.2 873.3 434.9L873.9 443M879.4 432.2C879.4 429.5 883.4 429.5 883.4 432.2L884.1 440.3M865.8 424.1L867.2 425.4M873.9 422L876.7 422M809 471.5C822.5 466 836 464.7 849.6 466L863.1 467.4L890.2 463.3L909.2 456.6M809 471.5C807.6 482.3 809 495.8 813 506.7L814.4 519.9M865.8 468.7C868.5 476.9 871.2 480.9 876.7 482.3C890.2 479.6 903.7 474.2 911.9 466L911.9 452.5L920 447.1M869.2 470.1L871.2 478.2M875.3 468.7L876.7 478.9M882.1 467.4L883.4 477.5M888.8 466L890.2 475.5M895.6 463.3L897 473.5M902.4 460.6L904.4 470.1M864.5 459.3C865.8 457.2 869.2 457.9 869.9 459.9L871.2 464.7M827.9 459.3L871.2 448.4L890.2 445.7L903.7 447.1L909.2 456.6M890.2 420L895.6 433.5L903.7 447.1"/>
<path stroke="#4a4a4a" stroke-width="2.9" d="M753.4 420C753.4 428.1 756.1 436.2 761.6 444.4C768.3 453.9 781.9 460.6 794.1 464.7M855 420L859.1 447.1"/>
<path fill="#333" d="M1146 254C1146 248 1156 246 1159 252C1162 258 1159 266 1153 266C1147 266 1145 260 1146 254Z"/>
<path fill="#6e6e6e" d="M1184 757L1186.5 757L1186.5 759.5L1184 759.5ZM1109.5 456L1111.5 456L1111.5 458.5L1109.5 458.5Z"/>
</g></svg><!--/ART-->
</div>
<!-- RIGHT PANELS -->
<div class="abs" style="left:1709px;top:45px;width:211px;height:9px;background:#3b3b3b;border-bottom:1px solid #2e2e2e"></div><svg class="abs" style="left:1728px;top:46px" width="8" height="6" viewBox="0 0 8 6"><path d="M3.5 0.5 L0.5 3 L3.5 5.5 Z M7 0.5 L4 3 L7 5.5 Z" fill="#d8d8d8"/></svg><svg class="abs" style="left:1909px;top:46px" width="8" height="6" viewBox="0 0 8 6"><path d="M0.5 0.5 L3.5 3 L0.5 5.5 Z M4 0.5 L7 3 L4 5.5 Z" fill="#d8d8d8"/></svg><div class="abs" style="left:1709px;top:54px;width:28px;height:82px;background:#535353;border-bottom:1px solid #3c3c3c"></div><div class="abs" style="left:1716px;top:56px;width:15px;height:3px;background:repeating-linear-gradient(90deg,#383838 0 1px,transparent 1px 2px)"></div><svg class="abs" style="left:1716px;top:63px" width="15" height="15" viewBox="0 0 15 15"><path d="M4.5 1 L8.5 2.5 V7.5 L4.5 9.5 L0.8 7.5 V2.5 Z" fill="#e6e6e6"/><path d="M0.8 2.5 L4.5 4.2 L8.5 2.5 M4.5 4.2 V9.5" stroke="#555" stroke-width="0.8" fill="none"/><rect x="10" y="1.5" width="3" height="3.2" fill="#e6e6e6"/><rect x="10" y="5.6" width="3" height="3.2" fill="#e6e6e6"/><rect x="1" y="11" width="12" height="2.6" fill="#e6e6e6"/><path d="M9.5 11.6 h3 l-1.5 1.6 Z" fill="#444"/></svg><div class="abs" style="left:1709px;top:84px;width:28px;height:1px;background:#3c3c3c;border-bottom:1px solid #5e5e5e;box-sizing:content-box"></div><div class="abs" style="left:1716px;top:88px;width:15px;height:3px;background:repeating-linear-gradient(90deg,#383838 0 1px,transparent 1px 2px)"></div><div class="abs" style="left:1717.5px;top:93px;will-change:transform;font-size:15px;line-height:18px;color:#ececec;letter-spacing:0">A</div><div class="abs" style="left:1728px;top:96px;width:1px;height:12px;background:#ececec"></div><div class="abs" style="left:1718px;top:113px;will-change:transform;font-size:14px;font-weight:bold;line-height:18px;color:#ececec">¶</div><div class="phead" style="left:1739px;top:54px;width:181px;height:12px"><div class="tab on" style="left:0px;width:47px">Navigator</div><div class="tab" style="left:47px;width:47px">Histogram</div><svg class="abs" style="left:168px;top:3px" width="11" height="7" viewBox="0 0 11 7"><path d="M0 1 h3.4 l-1.7 2.2 Z" fill="#ddd"/><path d="M4.5 0.8 h6 M4.5 3.3 h6 M4.5 5.8 h6" stroke="#ddd" stroke-width="1.1"/></svg></div><div class="panel" style="left:1739px;top:66px;width:181px;height:243px"></div><div class="abs" style="left:1744px;top:70px;width:171px;height:222px;background:#d5d5d3;border:1px solid #3a3a3a;overflow:hidden"><!--NAVART--><svg class="abs" style="left:0;top:0" width="169" height="220" viewBox="0 0 169 220"><use href="#art" transform="translate(1 18) scale(0.186) translate(-327 -45)"/></svg><!--/NAVART--></div><div class="abs" style="left:1745px;top:88px;width:169px;height:194px;border:2px solid #d85a5a;box-shadow:0 0 0 0.6px rgba(240,170,170,.45),inset 0 0 0 0.6px rgba(240,170,170,.45)"></div><div class="abs" style="left:1739px;top:295px;width:181px;height:1px;background:#464646"></div><div class="abs" style="left:1739px;top:296px;width:44px;height:13px;background:#3d3d3d"></div><div class="lbl" style="left:1741px;top:299px;font-weight:bold">25%</div><svg class="abs" style="left:1786px;top:298.500px" width="130" height="11" viewBox="0 0 130 11"><path d="M0.5 8 L3 4.5 L4.5 6 L6 4.5 L8.5 8 Z" fill="#d8d8d8"/><rect x="18.5" y="2.5" width="79" height="3" rx="1.5" fill="#444" stroke="#3a3a3a"/><path d="M50 1.5 C52.5 3 53.5 5 53.5 6.5 C53.5 8 46.500 8 46.500 6.500 C46.500 5 47.500 3 50 1.500 Z" fill="#cfcfcf"/><path d="M103 8.500 L108 2.500 L110.500 5.500 L112.500 3 L116.500 8.500 Z" fill="none" stroke="#d8d8d8" stroke-width="1"/></svg><div class="phead" style="left:1739px;top:310.500px;width:181px;height:14px"><div class="tab on" style="left:0px;width:37px">History</div><svg class="abs" style="left:168px;top:3px" width="11" height="7" viewBox="0 0 11 7"><path d="M0 1 h3.4 l-1.7 2.2 Z" fill="#ddd"/><path d="M4.5 0.8 h6 M4.5 3.3 h6 M4.5 5.8 h6" stroke="#ddd" stroke-width="1.1"/></svg></div><div class="panel" style="left:1739px;top:324px;width:181px;height:243px"></div><div class="abs" style="left:1739px;top:327.00px;width:168px;height:16.250px;background:#545454;border-top:1px solid #5f5f5f"><div class="abs" style="left:4px;top:3px;width:9px;height:9px;border:1px solid #3d3d3d;background:#515151"></div><svg class="abs" style="left:21.500px;top:0.500px" width="17" height="16" viewBox="0 0 16 15"><path d="M14.8 0.800 L7.300 8.300 L9.100 10 Z" fill="#ececec"/><path d="M7 9 C5.200 9 4.600 10.600 3.800 11.600 C3.200 12.400 2.200 12.400 1.600 12.400 C2.800 13.600 6 13.600 7.400 12.200 C8.400 11.200 8.600 10.200 8.600 10 Z" fill="#e2e2e2"/></svg><div class="lbl" style="left:44.500px;top:2.200px;font-weight:bold;font-size:7.600px;letter-spacing:-0.200px">Brush Tool</div></div><div class="abs" style="left:1739px;top:343.25px;width:168px;height:1px;background:#444"></div><div class="abs" style="left:1739px;top:344.25px;width:168px;height:16.250px;background:#545454;border-top:1px solid #5f5f5f"><div class="abs" style="left:4px;top:3px;width:9px;height:9px;border:1px solid #3d3d3d;background:#515151"></div><svg class="abs" style="left:22px;top:2px" width="16" height="13" viewBox="0 0 16 13"><path d="M5.500 1.500 H14 L10.500 6.500 H2 Z" fill="#ececec"/><path d="M2 7.200 H10.500 L14 2.400 V5.500 L10.500 10.500 H2 Z" fill="#c9c9c9"/></svg><div class="lbl" style="left:44.500px;top:2.200px;font-weight:bold;font-size:7.600px;letter-spacing:-0.200px">Eraser</div></div><div class="abs" style="left:1739px;top:360.50px;width:168px;height:1px;background:#444"></div><div class="abs" style="left:1739px;top:361.50px;width:168px;height:16.250px;background:#545454;border-top:1px solid #5f5f5f"><div class="abs" style="left:4px;top:3px;width:9px;height:9px;border:1px solid #3d3d3d;background:#515151"></div><svg class="abs" style="left:22px;top:2px" width="16" height="13" viewBox="0 0 16 13"><path d="M5.500 1.500 H14 L10.500 6.500 H2 Z" fill="#ececec"/><path d="M2 7.200 H10.500 L14 2.400 V5.500 L10.500 10.500 H2 Z" fill="#c9c9c9"/></svg><div class="lbl" style="left:44.500px;top:2.200px;font-weight:bold;font-size:7.600px;letter-spacing:-0.200px">Eraser</div></div><div class="abs" style="left:1739px;top:377.75px;width:168px;height:1px;background:#444"></div><div class="abs" style="left:1739px;top:378.75px;width:168px;height:16.250px;background:#545454;border-top:1px solid #5f5f5f"><div class="abs" style="left:4px;top:3px;width:9px;height:9px;border:1px solid #3d3d3d;background:#515151"></div><svg class="abs" style="left:21.500px;top:0.500px" width="17" height="16" viewBox="0 0 16 15"><path d="M14.8 0.800 L7.300 8.300 L9.100 10 Z" fill="#ececec"/><path d="M7 9 C5.200 9 4.600 10.600 3.800 11.600 C3.200 12.400 2.200 12.400 1.600 12.400 C2.800 13.600 6 13.600 7.400 12.200 C8.400 11.200 8.600 10.200 8.600 10 Z" fill="#e2e2e2"/></svg><div class="lbl" style="left:44.500px;top:2.200px;font-weight:bold;font-size:7.600px;letter-spacing:-0.200px">Brush Tool</div></div><div class="abs" style="left:1739px;top:395.00px;width:168px;height:1px;background:#444"></div><div class="abs" style="left:1739px;top:396.00px;width:168px;height:16.250px;background:#545454;border-top:1px solid #5f5f5f"><div class="abs" style="left:4px;top:3px;width:9px;height:9px;border:1px solid #3d3d3d;background:#515151"></div><svg class="abs" style="left:21.500px;top:0.500px" width="17" height="16" viewBox="0 0 16 15"><path d="M14.8 0.800 L7.300 8.300 L9.100 10 Z" fill="#ececec"/><path d="M7 9 C5.200 9 4.600 10.600 3.800 11.600 C3.200 12.400 2.200 12.400 1.600 12.400 C2.800 13.600 6 13.600 7.400 12.200 C8.400 11.200 8.600 10.200 8.600 10 Z" fill="#e2e2e2"/></svg><div class="lbl" style="left:44.500px;top:2.200px;font-weight:bold;font-size:7.600px;letter-spacing:-0.200px">Brush Tool</div></div><div class="abs" style="left:1739px;top:412.25px;width:168px;height:1px;background:#444"></div><div class="abs" style="left:1739px;top:413.25px;width:168px;height:16.250px;background:#545454;border-top:1px solid #5f5f5f"><div class="abs" style="left:4px;top:3px;width:9px;height:9px;border:1px solid #3d3d3d;background:#515151"></div><svg class="abs" style="left:21.500px;top:0.500px" width="17" height="16" viewBox="0 0 16 15"><path d="M14.8 0.800 L7.300 8.300 L9.100 10 Z" fill="#ececec"/><path d="M7 9 C5.200 9 4.600 10.600 3.800 11.600 C3.200 12.400 2.200 12.400 1.600 12.400 C2.800 13.600 6 13.600 7.400 12.200 C8.400 11.200 8.600 10.200 8.600 10 Z" fill="#e2e2e2"/></svg><div class="lbl" style="left:44.500px;top:2.200px;font-weight:bold;font-size:7.600px;letter-spacing:-0.200px">Brush Tool</div></div><div class="abs" style="left:1739px;top:429.50px;width:168px;height:1px;background:#444"></div><div class="abs" style="left:1739px;top:430.50px;width:168px;height:16.250px;background:#545454;border-top:1px solid #5f5f5f"><div class="abs" style="left:4px;top:3px;width:9px;height:9px;border:1px solid #3d3d3d;background:#515151"></div><svg class="abs" style="left:21.500px;top:0.500px" width="17" height="16" viewBox="0 0 16 15"><path d="M14.8 0.800 L7.300 8.300 L9.100 10 Z" fill="#ececec"/><path d="M7 9 C5.200 9 4.600 10.600 3.800 11.600 C3.200 12.400 2.200 12.400 1.600 12.400 C2.800 13.600 6 13.600 7.400 12.200 C8.400 11.200 8.600 10.200 8.600 10 Z" fill="#e2e2e2"/></svg><div class="lbl" style="left:44.500px;top:2.200px;font-weight:bold;font-size:7.600px;letter-spacing:-0.200px">Brush Tool</div></div><div class="abs" style="left:1739px;top:446.75px;width:168px;height:1px;background:#444"></div><div class="abs" style="left:1739px;top:447.75px;width:168px;height:16.250px;background:#545454;border-top:1px solid #5f5f5f"><div class="abs" style="left:4px;top:3px;width:9px;height:9px;border:1px solid #3d3d3d;background:#515151"></div><svg class="abs" style="left:21.500px;top:0.500px" width="17" height="16" viewBox="0 0 16 15"><path d="M14.8 0.800 L7.300 8.300 L9.100 10 Z" fill="#ececec"/><path d="M7 9 C5.200 9 4.600 10.600 3.800 11.600 C3.200 12.400 2.200 12.400 1.600 12.400 C2.800 13.600 6 13.600 7.400 12.200 C8.400 11.200 8.600 10.200 8.600 10 Z" fill="#e2e2e2"/></svg><div class="lbl" style="left:44.500px;top:2.200px;font-weight:bold;font-size:7.600px;letter-spacing:-0.200px">Brush Tool</div></div><div class="abs" style="left:1739px;top:464.00px;width:168px;height:1px;background:#444"></div><div class="abs" style="left:1739px;top:465.00px;width:168px;height:16.250px;background:#545454;border-top:1px solid #5f5f5f"><div class="abs" style="left:4px;top:3px;width:9px;height:9px;border:1px solid #3d3d3d;background:#515151"></div><svg class="abs" style="left:21.500px;top:0.500px" width="17" height="16" viewBox="0 0 16 15"><path d="M14.8 0.800 L7.300 8.300 L9.100 10 Z" fill="#ececec"/><path d="M7 9 C5.200 9 4.600 10.600 3.800 11.600 C3.200 12.400 2.200 12.400 1.600 12.400 C2.800 13.600 6 13.600 7.400 12.200 C8.400 11.200 8.600 10.200 8.600 10 Z" fill="#e2e2e2"/></svg><div class="lbl" style="left:44.500px;top:2.200px;font-weight:bold;font-size:7.600px;letter-spacing:-0.200px">Brush Tool</div></div><div class="abs" style="left:1739px;top:481.25px;width:168px;height:1px;background:#444"></div><div class="abs" style="left:1739px;top:482.25px;width:168px;height:16.250px;background:#545454;border-top:1px solid #5f5f5f"><div class="abs" style="left:4px;top:3px;width:9px;height:9px;border:1px solid #3d3d3d;background:#515151"></div><svg class="abs" style="left:22px;top:2px" width="16" height="13" viewBox="0 0 16 13"><path d="M5.500 1.500 H14 L10.500 6.500 H2 Z" fill="#ececec"/><path d="M2 7.200 H10.500 L14 2.400 V5.500 L10.500 10.500 H2 Z" fill="#c9c9c9"/></svg><div class="lbl" style="left:44.500px;top:2.200px;font-weight:bold;font-size:7.600px;letter-spacing:-0.200px">Eraser</div></div><div class="abs" style="left:1739px;top:498.50px;width:168px;height:1px;background:#444"></div><div class="abs" style="left:1739px;top:499.50px;width:168px;height:16.250px;background:#545454;border-top:1px solid #5f5f5f"><div class="abs" style="left:4px;top:3px;width:9px;height:9px;border:1px solid #3d3d3d;background:#515151"></div><svg class="abs" style="left:21.500px;top:0.500px" width="17" height="16" viewBox="0 0 16 15"><path d="M14.8 0.800 L7.300 8.300 L9.100 10 Z" fill="#ececec"/><path d="M7 9 C5.200 9 4.600 10.600 3.800 11.600 C3.200 12.400 2.200 12.400 1.600 12.400 C2.800 13.600 6 13.600 7.400 12.200 C8.400 11.200 8.600 10.200 8.600 10 Z" fill="#e2e2e2"/></svg><div class="lbl" style="left:44.500px;top:2.200px;font-weight:bold;font-size:7.600px;letter-spacing:-0.200px">Brush Tool</div></div><div class="abs" style="left:1739px;top:515.75px;width:168px;height:1px;background:#444"></div><div class="abs" style="left:1739px;top:516.75px;width:168px;height:16.250px;background:#545454;border-top:1px solid #5f5f5f"><div class="abs" style="left:4px;top:3px;width:9px;height:9px;border:1px solid #3d3d3d;background:#515151"></div><svg class="abs" style="left:21.500px;top:0.500px" width="17" height="16" viewBox="0 0 16 15"><path d="M14.8 0.800 L7.300 8.300 L9.100 10 Z" fill="#ececec"/><path d="M7 9 C5.200 9 4.600 10.600 3.800 11.600 C3.200 12.400 2.200 12.400 1.600 12.400 C2.800 13.600 6 13.600 7.400 12.200 C8.400 11.200 8.600 10.200 8.600 10 Z" fill="#e2e2e2"/></svg><div class="lbl" style="left:44.500px;top:2.200px;font-weight:bold;font-size:7.600px;letter-spacing:-0.200px">Brush Tool</div></div><div class="abs" style="left:1739px;top:533.00px;width:168px;height:1px;background:#444"></div><div class="abs" style="left:1739px;top:534.00px;width:168px;height:16.250px;background:#6a7c98;border-top:1px solid #7a8ba6"><div class="abs" style="left:4px;top:3px;width:9px;height:9px;border:1px solid #4a5a72;background:#66789a"></div><svg class="abs" style="left:21.500px;top:0.500px" width="17" height="16" viewBox="0 0 16 15"><path d="M14.8 0.800 L7.300 8.300 L9.100 10 Z" fill="#ececec"/><path d="M7 9 C5.200 9 4.600 10.600 3.800 11.600 C3.200 12.400 2.200 12.400 1.600 12.400 C2.800 13.600 6 13.600 7.400 12.200 C8.400 11.200 8.600 10.200 8.600 10 Z" fill="#e2e2e2"/></svg><div class="lbl" style="left:44.500px;top:2.200px;font-weight:bold;font-size:7.600px;letter-spacing:-0.200px">Brush Tool</div></div><div class="abs" style="left:1739px;top:550.25px;width:168px;height:1px;background:#444"></div><div class="abs" style="left:1907px;top:326px;width:13px;height:226px;background:#4b4b4b;border-left:1px solid #444"></div><svg class="abs" style="left:1910px;top:329px" width="7" height="5"><path d="M0.500 4 L3.500 0.800 L6.500 4 Z" fill="#e6e6e6"/></svg><svg class="abs" style="left:1910px;top:544px" width="7" height="5"><path d="M0.500 0.800 L3.500 4 L6.500 0.800 Z" fill="#e6e6e6"/></svg><div class="abs" style="left:1909px;top:534px;width:9px;height:4px;background:#8a8a8a;border-radius:2px"></div><div class="abs" style="left:1739px;top:552px;width:181px;height:15px;background:#535353;border-top:1px solid #444"></div><svg class="abs" style="left:1842px;top:554px" width="60" height="12" viewBox="0 0 60 12"><rect x="4" y="1" width="7" height="8" fill="#dedede"/><path d="M0.500 5.500 h6 M3.500 2.500 v6" stroke="#dedede" stroke-width="1.600"/><path d="M6 4 h3 v3" stroke="#555" fill="none" stroke-width="0.800"/><path d="M24 3 h3 l1 -1.500 h4 l1 1.500 h3 v7 h-12 Z" fill="#dedede"/><circle cx="30" cy="6.300" r="2.200" fill="#555"/><circle cx="30" cy="6.300" r="1.100" fill="#dedede"/><path d="M47.500 3.500 h7 l-0.800 7 h-5.400 Z" fill="#dedede"/><path d="M46.500 2.600 h9 M49.500 1.200 h3" stroke="#dedede" stroke-width="1.200"/><path d="M49.700 5 v4.500 M51 5 v4.500 M52.300 5 v4.500" stroke="#555" stroke-width="0.600"/></svg><div class="phead" style="left:1739px;top:568px;width:181px;height:12px"><div class="tab on" style="left:0px;width:30px">Color</div><div class="tab" style="left:30px;width:44px">Swatches</div><svg class="abs" style="left:168px;top:3px" width="11" height="7" viewBox="0 0 11 7"><path d="M0 1 h3.4 l-1.7 2.2 Z" fill="#ddd"/><path d="M4.5 0.8 h6 M4.5 3.3 h6 M4.5 5.8 h6" stroke="#ddd" stroke-width="1.1"/></svg></div><div class="panel" style="left:1739px;top:580px;width:181px;height:127px"></div><div class="abs" style="left:1754px;top:596px;width:14px;height:14px;background:#3d3d42;border:1px solid #e0e0e0;outline:1px solid #333"></div><div class="abs" style="left:1746px;top:588px;width:15px;height:15px;background:#3d3d42;border:1px solid #f0f0f0;outline:1px solid #2e2e2e;box-shadow:0 0 0 2px #6a6a6a"></div><div class="abs" style="left:1773px;top:585px;width:108px;height:117px;background:linear-gradient(to bottom,rgba(0,0,0,0),#000),linear-gradient(to right,#fff,#0055ff)"></div><div class="abs" style="left:1773.5px;top:669.5px;width:9px;height:9px;border:1px solid #e8e8e8;border-radius:50%;box-shadow:0 0 0 0.5px #222"></div><div class="abs" style="left:1892px;top:585px;width:16px;height:117px;background:linear-gradient(to bottom,#ff0000 0%,#ff00ff 16.6%,#0000ff 33.3%,#00ffff 50%,#00ff00 66.6%,#ffff00 83.3%,#ff0000 100%)"></div><svg class="abs" style="left:1885px;top:625px" width="6" height="8"><path d="M0.5 1 L3 1 L5.5 4 L3 7 L0.5 7 Z" fill="#e8e8e8"/></svg><div class="phead" style="left:1739px;top:707.500px;width:181px;height:14px"><div class="tab on" style="left:0px;width:33px">Layers</div><div class="tab" style="left:33px;width:41px">Channels</div><svg class="abs" style="left:168px;top:3px" width="11" height="7" viewBox="0 0 11 7"><path d="M0 1 h3.4 l-1.7 2.2 Z" fill="#ddd"/><path d="M4.5 0.8 h6 M4.5 3.3 h6 M4.5 5.8 h6" stroke="#ddd" stroke-width="1.1"/></svg></div><div class="panel" style="left:1739px;top:721px;width:181px;height:359px"></div><div class="dd" style="left:1742px;top:726px;width:67px;height:13px"></div><svg class="abs" style="left:1747px;top:728px" width="9" height="9" viewBox="0 0 9 9"><circle cx="5" cy="3.500" r="2.500" fill="none" stroke="#e6e6e6" stroke-width="1.200"/><path d="M3.200 5.300 L0.800 8" stroke="#e6e6e6" stroke-width="1.400"/></svg><div class="lbl" style="left:1759px;top:728px">Kind</div><svg class="abs" style="left:1801px;top:728px" width="7" height="9" viewBox="0 0 7 9"><path d="M3.500 0.500 L6 3.500 H1 Z M3.500 8.500 L6 5.500 H1 Z" fill="#ededed"/></svg><svg class="abs" style="left:1816px;top:725px" width="104" height="15" viewBox="0 0 104 15"><rect x="2" y="3" width="9.500" height="8" fill="none" stroke="#e2e2e2" stroke-width="1.200"/><path d="M3.500 10 L6 6.500 L7.500 8.500 L8.500 7.500 L10.500 10 Z" fill="#e2e2e2"/><circle cx="8.800" cy="5.200" r="0.900" fill="#e2e2e2"/><circle cx="24.500" cy="6.800" r="4" fill="none" stroke="#e2e2e2" stroke-width="1.100"/><path d="M21.700 9.600 A4 4 0 0 1 27.300 4 Z" fill="#e2e2e2"/><path d="M57 3 h1.500 M65 3 h1.500 M57 11 h1.500 M65 11 h1.500" stroke="#e2e2e2" stroke-width="2.200"/><rect x="58" y="3.300" width="7.500" height="7.400" fill="none" stroke="#e2e2e2" stroke-width="1"/><path d="M78 2.500 h4 l2.500 2.500 v5.500 h-6.500 Z" fill="none" stroke="#e2e2e2" stroke-width="1"/><rect x="75.500" y="6.500" width="5" height="5" fill="#e2e2e2"/><rect x="94" y="1" width="6" height="12" rx="1.500" fill="#3f3f3f"/><rect x="94.500" y="1.500" width="5" height="5" rx="1" fill="#7a7a7a"/></svg><div class="abs" style="left:1853px;top:724px;will-change:transform;font-family:'Liberation Serif',serif;font-size:13px;line-height:15px;color:#e2e2e2">T</div><div class="abs" style="left:1739px;top:742px;width:181px;height:1px;background:#464646;border-bottom:1px solid #5c5c5c;box-sizing:content-box"></div><div class="dd" style="left:1742px;top:747px;width:96px;height:13px"></div><div class="lbl" style="left:1748px;top:749px">Normal</div><svg class="abs" style="left:1830px;top:749px" width="7" height="9" viewBox="0 0 7 9"><path d="M3.500 0.500 L6 3.500 H1 Z M3.500 8.500 L6 5.500 H1 Z" fill="#ededed"/></svg><div class="lbl" style="left:1845px;top:749px">Opacity:</div><div class="inp" style="left:1876px;top:746px;width:26px;height:14px"></div><div class="lbl" style="left:1879px;top:749px">100%</div><div class="btn" style="left:1902px;top:746px;width:13px;height:14px"></div><div class="tri" style="left:1906px;top:752px;border-left-width:2.500px;border-right-width:2.500px"></div><div class="abs" style="left:1739px;top:763px;width:181px;height:1px;background:#464646;border-bottom:1px solid #5c5c5c;box-sizing:content-box"></div><div class="lbl" style="left:1744px;top:770px">Lock:</div><svg class="abs" style="left:1766px;top:767px" width="70" height="14" viewBox="0 0 70 14"><rect x="2" y="3" width="8.500" height="8.500" fill="#d9d9d9"/><path d="M2 3 h2.800 v2.800 h-2.800 Z M7.600 3 h2.800 v2.800 h-2.800 Z M4.800 5.800 h2.800 v2.800 h-2.800 Z M2 8.600 h2.800 v2.800 h-2.800 Z M7.600 8.600 h2.800 v2.800 h-2.800 Z" fill="#7c7c7c"/><path d="M29.500 1 L23.500 8 L24.600 9 Z" fill="#e6e6e6"/><path d="M23 8.300 C21.500 8.300 21 9.800 20.300 10.600 C19.800 11.300 19 11.300 18.500 11.300 C19.500 12.400 22.300 12.400 23.500 11.200 C24.300 10.300 24.500 9.500 24.500 9.300 Z" fill="#e0e0e0"/><path d="M39.500 3 v9 M35 7.500 h9 M39.500 1.500 l-1.800 2.300 h3.600 Z M39.500 13.500 l-1.800 -2.300 h3.600 Z M33.500 7.500 l2.300 -1.800 v3.600 Z M45.500 7.500 l-2.300 -1.800 v3.600 Z" stroke="#e2e2e2" stroke-width="0.900" fill="#e2e2e2"/><rect x="52.500" y="6.500" width="7.500" height="5.500" fill="#e2e2e2"/><path d="M54 6.500 V4.800 C54 2.500 58.500 2.500 58.500 4.800 V6.500" fill="none" stroke="#e2e2e2" stroke-width="1.200"/><rect x="55.700" y="8.200" width="1.200" height="2" fill="#555"/></svg><div class="lbl" style="left:1861px;top:770px">Fill:</div><div class="inp" style="left:1876px;top:767px;width:26px;height:14px"></div><div class="lbl" style="left:1879px;top:770px">100%</div><div class="btn" style="left:1902px;top:767px;width:13px;height:14px"></div><div class="tri" style="left:1906px;top:773px;border-left-width:2.500px;border-right-width:2.500px"></div><div class="abs" style="left:1739px;top:785px;width:169px;height:273px;background:#474747"></div><div class="abs" style="left:1908px;top:785px;width:12px;height:273px;background:#4c4c4c;border-left:1px solid #404040"></div><div class="abs" style="left:1739px;top:786.0px;width:169px;height:28.200px;background:#6a7c98"><div class="abs" style="left:0;top:0;width:23px;height:28.200px;background:#535353;border-right:1px solid #444"></div><svg class="abs" style="left:5px;top:9px" width="12" height="9" viewBox="0 0 12 9"><path d="M0.500 4.500 C2.500 0.800 9.500 0.800 11.500 4.500 C9.500 8.200 2.500 8.200 0.500 4.500 Z" fill="#e6e6e6"/><circle cx="6" cy="4.300" r="2.200" fill="#4a4a4a"/><circle cx="5.400" cy="3.600" r="0.800" fill="#e6e6e6"/></svg><div class="abs" style="left:26px;top:2px;width:18px;height:24px;background-color:#fff;background-image:linear-gradient(45deg,#ccc 25%,transparent 25%,transparent 75%,#ccc 75%),linear-gradient(45deg,#ccc 25%,transparent 25%,transparent 75%,#ccc 75%);background-size:6px 6px;background-position:0 0,3px 3px;border:1px solid #2c2c2c"></div><svg class="abs" style="left:24px;top:0" width="22" height="28"><path d="M0.500 5 V0.500 H5 M17 0.500 H21.500 V5 M21.500 23 V27.500 H17 M5 27.500 H0.500 V23" fill="none" stroke="#f0f0f0" stroke-width="1"/></svg><div class="lbl" style="left:52px;top:11.300px;">Lines</div></div><div class="abs" style="left:1739px;top:814.2px;width:169px;height:1px;background:#3e3e3e"></div><div class="abs" style="left:1739px;top:815.2px;width:169px;height:28.200px;background:#535353"><div class="abs" style="left:0;top:0;width:23px;height:28.200px;background:#535353;border-right:1px solid #444"></div><svg class="abs" style="left:5px;top:9px" width="12" height="9" viewBox="0 0 12 9"><path d="M0.500 4.500 C2.500 0.800 9.500 0.800 11.500 4.500 C9.500 8.200 2.500 8.200 0.500 4.500 Z" fill="#e6e6e6"/><circle cx="6" cy="4.300" r="2.200" fill="#4a4a4a"/><circle cx="5.400" cy="3.600" r="0.800" fill="#e6e6e6"/></svg><div class="abs" style="left:26px;top:2px;width:18px;height:24px;background-color:#fff;background-image:linear-gradient(45deg,#ccc 25%,transparent 25%,transparent 75%,#ccc 75%),linear-gradient(45deg,#ccc 25%,transparent 25%,transparent 75%,#ccc 75%);background-size:6px 6px;background-position:0 0,3px 3px;border:1px solid #2c2c2c"></div><div class="lbl" style="left:52px;top:11.300px;">Flats</div></div><div class="abs" style="left:1739px;top:843.4px;width:169px;height:1px;background:#3e3e3e"></div><div class="abs" style="left:1739px;top:844.4px;width:169px;height:28.200px;background:#535353"><div class="abs" style="left:0;top:0;width:23px;height:28.200px;background:#535353;border-right:1px solid #444"></div><svg class="abs" style="left:5px;top:9px" width="12" height="9" viewBox="0 0 12 9"><path d="M0.500 4.500 C2.500 0.800 9.500 0.800 11.500 4.500 C9.500 8.200 2.500 8.200 0.500 4.500 Z" fill="#e6e6e6"/><circle cx="6" cy="4.300" r="2.200" fill="#4a4a4a"/><circle cx="5.400" cy="3.600" r="0.800" fill="#e6e6e6"/></svg><div class="abs" style="left:26px;top:2px;width:18px;height:24px;background:#d9d9d7;border:1px solid #2c2c2c"></div><div class="lbl" style="left:52px;top:11.300px;font-style:italic">Background</div><svg class="abs" style="left:148px;top:8px" width="9" height="11" viewBox="0 0 9 11"><rect x="1" y="4.500" width="7" height="5.500" fill="none" stroke="#e2e2e2" stroke-width="1"/><path d="M2.500 4.500 V3.300 C2.500 1.200 6.500 1.200 6.500 3.300 V4.500" fill="none" stroke="#e2e2e2" stroke-width="1"/><rect x="4" y="6.300" width="1" height="2" fill="#e2e2e2"/></svg></div><div class="abs" style="left:1739px;top:872.6px;width:169px;height:1px;background:#3e3e3e"></div><div class="abs" style="left:1770px;top:821px;will-change:transform;font-size:5px;color:#444;line-height:6px">( )</div><div class="abs" style="left:1739px;top:1058px;width:181px;height:16px;background:#535353;border-top:1px solid #404040"></div><svg class="abs" style="left:1764px;top:1060px" width="140" height="14" viewBox="0 0 140 14"><path d="M4 5.300 h3 a1.700 1.700 0 0 1 0 3.400 h-3 a1.700 1.700 0 0 1 0 -3.400 Z M9 5.300 h3 a1.700 1.700 0 0 1 0 3.400 h-3 a1.700 1.700 0 0 1 0 -3.400 Z" fill="none" stroke="#d4d4d4" stroke-width="1"/><rect x="43" y="3" width="11" height="8.500" fill="#dedede"/><circle cx="48.500" cy="7.200" r="2.200" fill="#505050"/><circle cx="68.500" cy="7" r="4" fill="none" stroke="#dedede" stroke-width="1.100"/><path d="M65.700 9.800 A4 4 0 0 1 71.300 4.200 Z" fill="#dedede"/><rect x="75" y="10" width="1.200" height="1.200" fill="#dedede"/><path d="M84 3.500 h4 l1 1.200 h5 v6.800 h-10 Z" fill="#dedede"/><path d="M104.500 3 h8 v8.500 h-3.500 v-5 h-4.500 Z" fill="#dedede"/><path d="M104.500 7 h4 v4.500 Z" fill="#bdbdbd"/><path d="M125.500 5 h7 l-0.800 7 h-5.400 Z" fill="#dedede"/><path d="M124.500 4 h9 M127.500 2.600 h3" stroke="#dedede" stroke-width="1.200"/><path d="M127.700 6.300 v4.500 M129 6.300 v4.500 M130.300 6.300 v4.500" stroke="#555" stroke-width="0.600"/><rect x="34" y="10" width="1.200" height="1.200" fill="#dedede"/></svg><div class="abs" style="left:1790px;top:1059px;will-change:transform;font-family:'Liberation Serif',serif;font-style:italic;font-size:11.500px;line-height:14px;color:#dedede;letter-spacing:-0.500px">fx</div><div class="abs" style="left:1739px;top:1074px;width:181px;height:6px;background:#4a4a4a;border-top:1px solid #3a3a3a"></div><div class="abs" style="left:1823px;top:1076px;width:13px;height:2px;background:repeating-linear-gradient(90deg,#333 0 1px,transparent 1px 2px)"></div>
</body>
</html>
